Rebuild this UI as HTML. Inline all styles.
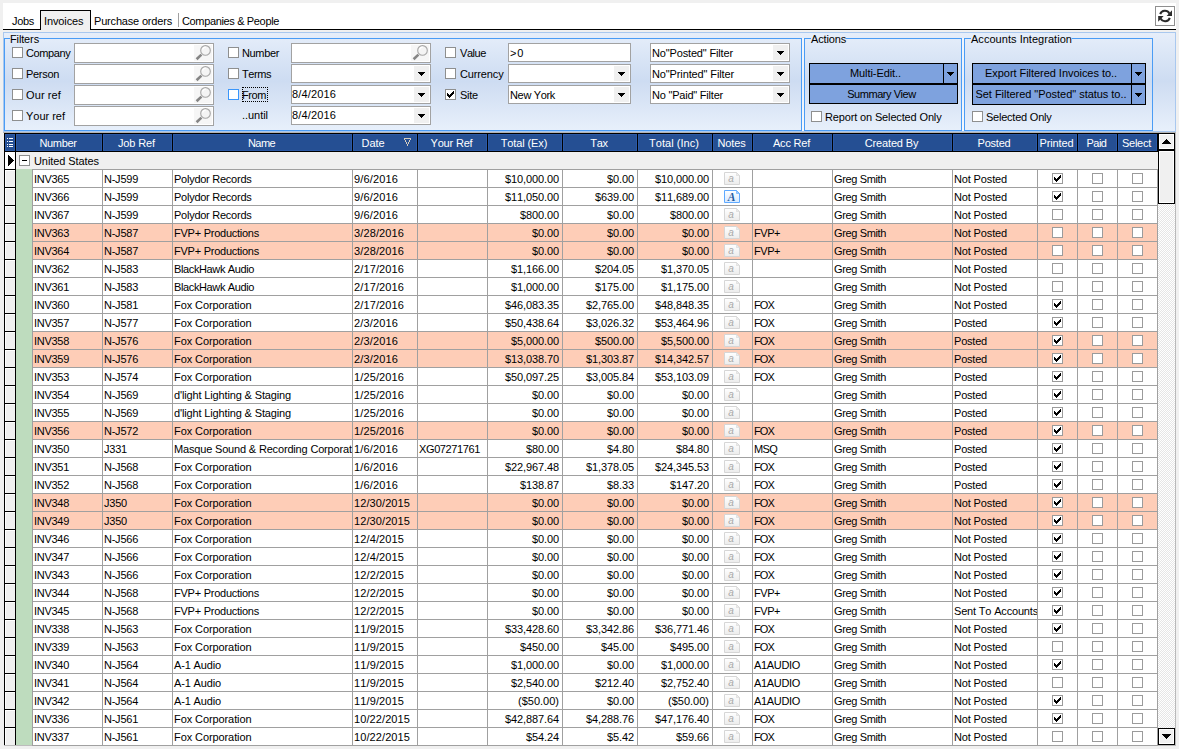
<!DOCTYPE html>
<html><head><meta charset="utf-8"><title>Invoices</title>
<style>
html,body{margin:0;padding:0}
body{width:1179px;height:749px;background:#f0f0f0;overflow:hidden;position:relative;font-family:"Liberation Sans",sans-serif;font-size:11px;color:#000}
.t{position:absolute;white-space:nowrap;line-height:13px;font-size:11px;font-kerning:none}
.w{color:#fff}
.cb{position:absolute;width:9px;height:9px;border:1px solid #8e8f8f;background:#fff}
.cb .ck{position:absolute;left:1px;top:1px}
.cb.g{border-color:#9b9b9b}
.cb.foc{border-color:#3a96fb}
.inp{background:#fff;border:1px solid #a2a2a2;box-sizing:border-box}
.gb{position:absolute;border:1px solid #4a9cf5;box-sizing:border-box}
.btn{position:absolute;box-sizing:border-box;border:1px solid #000;background:#7ea2de}
.hl{position:absolute;background:#000}
.gl{position:absolute;background:#a0a0a0}
.r{text-align:right}
.c{text-align:center}
</style></head><body>

<svg width="0" height="0" style="position:absolute"><defs><linearGradient id="ng" x1="0" y1="0" x2="0" y2="1"><stop offset="0" stop-color="#ffffff"/><stop offset="1" stop-color="#ececec"/></linearGradient><linearGradient id="nb" x1="0" y1="0" x2="0" y2="1"><stop offset="0" stop-color="#ffffff"/><stop offset="1" stop-color="#d5e8ff"/></linearGradient></defs></svg>
<div class="" style="position:absolute;left:3px;top:3px;width:1173px;height:26px;background:#fff"></div>
<div class="" style="position:absolute;left:3px;top:29px;width:1173px;height:1px;background:#000"></div>
<div class="" style="position:absolute;left:40px;top:10px;width:51px;height:20px;background:#f0f0f0;border:1px solid #000;border-bottom:none;box-sizing:border-box"></div>
<div class="t " style="left:12px;top:15px;letter-spacing:-0.309px;">Jobs</div>
<div class="t " style="left:44px;top:15px;letter-spacing:-0.107px;">Invoices</div>
<div class="t " style="left:94px;top:15px;letter-spacing:-0.180px;">Purchase orders</div>
<div class="t " style="left:182px;top:15px;letter-spacing:-0.352px;">Companies &amp; People</div>
<div class="" style="position:absolute;left:178px;top:13px;width:1px;height:14px;background:#a0a0a0"></div>
<div class="" style="position:absolute;left:1155px;top:6px;width:20px;height:20px;background:#fff;border:1px solid #8f8f8f;box-sizing:border-box"><svg width="18" height="18" viewBox="0 0 18 18" style="position:absolute;left:0;top:0"><g fill="none" stroke="#2a2a2a" stroke-width="2"><path d="M4.2 7.2 A5 5 0 0 1 13.4 6.6"/><path d="M13.8 10.8 A5 5 0 0 1 4.6 11.4"/></g><path d="M16 3.2 V8.9 H10.6 Z" fill="#2a2a2a"/><path d="M2.2 14.8 V9.1 H7.6 Z" fill="#2a2a2a"/></svg></div>
<div class="" style="position:absolute;left:3px;top:32px;width:1173px;height:100px;background:linear-gradient(to bottom,#e6eefa 0%,#cddcf2 49%,#cfddf2 52%,#e8f0fb 100%);border:1px solid #a9c8ef;box-sizing:border-box"></div>
<div class="" style="position:absolute;left:802px;top:38px;width:2px;height:93px;background:rgba(255,255,255,.55)"></div>
<div class="" style="position:absolute;left:962px;top:38px;width:2px;height:93px;background:rgba(255,255,255,.55)"></div>
<div class="" style="position:absolute;left:4px;top:38px;width:1px;height:93px;background:#4a9cf5"></div>
<div class="" style="position:absolute;left:801px;top:38px;width:1px;height:93px;background:#4a9cf5"></div>
<div class="" style="position:absolute;left:4px;top:130px;width:798px;height:1px;background:#4a9cf5"></div>
<div class="" style="position:absolute;left:4px;top:38px;width:6px;height:1px;background:#4a9cf5"></div>
<div class="" style="position:absolute;left:39px;top:38px;width:762px;height:1px;background:#4a9cf5"></div>
<div class="t " style="left:10px;top:33px;letter-spacing:-0.135px;">Filters</div>
<div class="" style="position:absolute;left:804px;top:38px;width:1px;height:93px;background:#4a9cf5"></div>
<div class="" style="position:absolute;left:961px;top:38px;width:1px;height:93px;background:#4a9cf5"></div>
<div class="" style="position:absolute;left:804px;top:130px;width:158px;height:1px;background:#4a9cf5"></div>
<div class="" style="position:absolute;left:804px;top:38px;width:7px;height:1px;background:#4a9cf5"></div>
<div class="" style="position:absolute;left:846px;top:38px;width:115px;height:1px;background:#4a9cf5"></div>
<div class="t " style="left:811px;top:33px;letter-spacing:-0.153px;">Actions</div>
<div class="" style="position:absolute;left:964px;top:38px;width:1px;height:93px;background:#4a9cf5"></div>
<div class="" style="position:absolute;left:1152px;top:38px;width:1px;height:93px;background:#4a9cf5"></div>
<div class="" style="position:absolute;left:964px;top:130px;width:189px;height:1px;background:#4a9cf5"></div>
<div class="" style="position:absolute;left:964px;top:38px;width:7px;height:1px;background:#4a9cf5"></div>
<div class="" style="position:absolute;left:1072px;top:38px;width:80px;height:1px;background:#4a9cf5"></div>
<div class="t " style="left:971px;top:33px;letter-spacing:0.036px;">Accounts Integration</div>
<div class="cb " style="left:12px;top:47px"></div>
<div class="t " style="left:26px;top:47px;letter-spacing:-0.368px;">Company</div>
<div class="inp" style="position:absolute;left:74px;top:43px;width:140px;height:20px;"></div>
<div class="" style="position:absolute;left:194px;top:45px;width:18px;height:16px;background:#f6f6f6"><svg width="18" height="16" viewBox="0 0 18 16" style="position:absolute;left:0;top:0"><line x1="7.4" y1="9.6" x2="2.6" y2="14.2" stroke="#858585" stroke-width="2.6"/><circle cx="11.5" cy="5.4" r="4.8" fill="#f4f4f4" stroke="#a6a6a6" stroke-width="1.1"/><path d="M8.6 4.6 A3.2 3.2 0 0 1 11.8 2.2" fill="none" stroke="#fff" stroke-width="1.2"/></svg></div>
<div class="cb " style="left:12px;top:68px"></div>
<div class="t " style="left:26px;top:68px;letter-spacing:-0.309px;">Person</div>
<div class="inp" style="position:absolute;left:74px;top:64px;width:140px;height:20px;"></div>
<div class="" style="position:absolute;left:194px;top:66px;width:18px;height:16px;background:#f6f6f6"><svg width="18" height="16" viewBox="0 0 18 16" style="position:absolute;left:0;top:0"><line x1="7.4" y1="9.6" x2="2.6" y2="14.2" stroke="#858585" stroke-width="2.6"/><circle cx="11.5" cy="5.4" r="4.8" fill="#f4f4f4" stroke="#a6a6a6" stroke-width="1.1"/><path d="M8.6 4.6 A3.2 3.2 0 0 1 11.8 2.2" fill="none" stroke="#fff" stroke-width="1.2"/></svg></div>
<div class="cb " style="left:12px;top:89px"></div>
<div class="t " style="left:26px;top:89px;letter-spacing:0.110px;">Our ref</div>
<div class="inp" style="position:absolute;left:74px;top:85px;width:140px;height:20px;"></div>
<div class="" style="position:absolute;left:194px;top:87px;width:18px;height:16px;background:#f6f6f6"><svg width="18" height="16" viewBox="0 0 18 16" style="position:absolute;left:0;top:0"><line x1="7.4" y1="9.6" x2="2.6" y2="14.2" stroke="#858585" stroke-width="2.6"/><circle cx="11.5" cy="5.4" r="4.8" fill="#f4f4f4" stroke="#a6a6a6" stroke-width="1.1"/><path d="M8.6 4.6 A3.2 3.2 0 0 1 11.8 2.2" fill="none" stroke="#fff" stroke-width="1.2"/></svg></div>
<div class="cb " style="left:12px;top:110px"></div>
<div class="t " style="left:26px;top:110px;letter-spacing:-0.016px;">Your ref</div>
<div class="inp" style="position:absolute;left:74px;top:106px;width:140px;height:20px;"></div>
<div class="" style="position:absolute;left:194px;top:108px;width:18px;height:16px;background:#f6f6f6"><svg width="18" height="16" viewBox="0 0 18 16" style="position:absolute;left:0;top:0"><line x1="7.4" y1="9.6" x2="2.6" y2="14.2" stroke="#858585" stroke-width="2.6"/><circle cx="11.5" cy="5.4" r="4.8" fill="#f4f4f4" stroke="#a6a6a6" stroke-width="1.1"/><path d="M8.6 4.6 A3.2 3.2 0 0 1 11.8 2.2" fill="none" stroke="#fff" stroke-width="1.2"/></svg></div>
<div class="cb " style="left:228px;top:47px"></div>
<div class="t " style="left:242px;top:47px;letter-spacing:-0.354px;">Number</div>
<div class="inp" style="position:absolute;left:291px;top:43px;width:140px;height:20px;"></div>
<div class="" style="position:absolute;left:411px;top:45px;width:18px;height:16px;background:#f6f6f6"><svg width="18" height="16" viewBox="0 0 18 16" style="position:absolute;left:0;top:0"><line x1="7.4" y1="9.6" x2="2.6" y2="14.2" stroke="#858585" stroke-width="2.6"/><circle cx="11.5" cy="5.4" r="4.8" fill="#f4f4f4" stroke="#a6a6a6" stroke-width="1.1"/><path d="M8.6 4.6 A3.2 3.2 0 0 1 11.8 2.2" fill="none" stroke="#fff" stroke-width="1.2"/></svg></div>
<div class="cb " style="left:228px;top:68px"></div>
<div class="t " style="left:242px;top:68px;letter-spacing:-0.433px;">Terms</div>
<div class="inp" style="position:absolute;left:291px;top:64px;width:140px;height:19px;"></div>
<div class="" style="position:absolute;left:414px;top:66px;width:15px;height:15px;background:#f0f0f0"><svg width="7" height="4" viewBox="0 0 7 4" shape-rendering="crispEdges" style="position:absolute;left:4px;top:6px"><path d="M0 0h7v1h-7zM1 1h5v1h-5zM2 2h3v1h-3zM3 3h1v1h-1z" fill="#000"/></svg></div>
<div class="cb foc" style="left:228px;top:89px"></div>
<div class="t " style="left:242px;top:89px;letter-spacing:-0.416px;">From</div>
<div class="inp" style="position:absolute;left:291px;top:85px;width:140px;height:19px;"></div>
<div class="" style="position:absolute;left:414px;top:87px;width:15px;height:15px;background:#f0f0f0"><svg width="7" height="4" viewBox="0 0 7 4" shape-rendering="crispEdges" style="position:absolute;left:4px;top:6px"><path d="M0 0h7v1h-7zM1 1h5v1h-5zM2 2h3v1h-3zM3 3h1v1h-1z" fill="#000"/></svg></div>
<div class="t " style="left:292px;top:88px;letter-spacing:0.148px;">8/4/2016</div>
<div class="" style="position:absolute;left:242px;top:87px;width:26px;height:15px;border:1px dotted #000;box-sizing:border-box"></div>
<div class="t " style="left:242px;top:109px;letter-spacing:-0.042px;">..until</div>
<div class="inp" style="position:absolute;left:291px;top:106px;width:140px;height:19px;"></div>
<div class="" style="position:absolute;left:414px;top:108px;width:15px;height:15px;background:#f0f0f0"><svg width="7" height="4" viewBox="0 0 7 4" shape-rendering="crispEdges" style="position:absolute;left:4px;top:6px"><path d="M0 0h7v1h-7zM1 1h5v1h-5zM2 2h3v1h-3zM3 3h1v1h-1z" fill="#000"/></svg></div>
<div class="t " style="left:292px;top:109px;letter-spacing:0.148px;">8/4/2016</div>
<div class="cb " style="left:445px;top:47px"></div>
<div class="t " style="left:460px;top:47px;letter-spacing:-0.427px;">Value</div>
<div class="inp" style="position:absolute;left:508px;top:43px;width:123px;height:19px;"></div>
<div class="t " style="left:510px;top:47px;letter-spacing:0.729px;">&gt;0</div>
<div class="cb " style="left:445px;top:68px"></div>
<div class="t " style="left:460px;top:68px;letter-spacing:-0.140px;">Currency</div>
<div class="inp" style="position:absolute;left:508px;top:64px;width:123px;height:19px;"></div>
<div class="" style="position:absolute;left:614px;top:66px;width:15px;height:15px;background:#f0f0f0"><svg width="7" height="4" viewBox="0 0 7 4" shape-rendering="crispEdges" style="position:absolute;left:4px;top:6px"><path d="M0 0h7v1h-7zM1 1h5v1h-5zM2 2h3v1h-3zM3 3h1v1h-1z" fill="#000"/></svg></div>
<div class="cb " style="left:445px;top:89px"><svg class="ck" width="7" height="7" viewBox="0 0 7 7" shape-rendering="crispEdges"><path d="M0 2h1v3h-1zM1 3h1v3h-1zM2 4h1v3h-1zM3 3h1v3h-1zM4 2h1v3h-1zM5 1h1v3h-1zM6 0h1v3h-1z" fill="#000"/></svg></div>
<div class="t " style="left:460px;top:89px;letter-spacing:-0.239px;">Site</div>
<div class="inp" style="position:absolute;left:508px;top:85px;width:123px;height:19px;"></div>
<div class="" style="position:absolute;left:614px;top:87px;width:15px;height:15px;background:#f0f0f0"><svg width="7" height="4" viewBox="0 0 7 4" shape-rendering="crispEdges" style="position:absolute;left:4px;top:6px"><path d="M0 0h7v1h-7zM1 1h5v1h-5zM2 2h3v1h-3zM3 3h1v1h-1z" fill="#000"/></svg></div>
<div class="t " style="left:510px;top:89px;letter-spacing:-0.335px;">New York</div>
<div class="inp" style="position:absolute;left:650px;top:43px;width:140px;height:19px;"></div>
<div class="" style="position:absolute;left:773px;top:45px;width:15px;height:15px;background:#f0f0f0"><svg width="7" height="4" viewBox="0 0 7 4" shape-rendering="crispEdges" style="position:absolute;left:4px;top:6px"><path d="M0 0h7v1h-7zM1 1h5v1h-5zM2 2h3v1h-3zM3 3h1v1h-1z" fill="#000"/></svg></div>
<div class="t " style="left:652px;top:47px;letter-spacing:-0.154px;">No"Posted" Filter</div>
<div class="inp" style="position:absolute;left:650px;top:64px;width:140px;height:19px;"></div>
<div class="" style="position:absolute;left:773px;top:66px;width:15px;height:15px;background:#f0f0f0"><svg width="7" height="4" viewBox="0 0 7 4" shape-rendering="crispEdges" style="position:absolute;left:4px;top:6px"><path d="M0 0h7v1h-7zM1 1h5v1h-5zM2 2h3v1h-3zM3 3h1v1h-1z" fill="#000"/></svg></div>
<div class="t " style="left:652px;top:68px;letter-spacing:-0.124px;">No"Printed" Filter</div>
<div class="inp" style="position:absolute;left:650px;top:85px;width:140px;height:19px;"></div>
<div class="" style="position:absolute;left:773px;top:87px;width:15px;height:15px;background:#f0f0f0"><svg width="7" height="4" viewBox="0 0 7 4" shape-rendering="crispEdges" style="position:absolute;left:4px;top:6px"><path d="M0 0h7v1h-7zM1 1h5v1h-5zM2 2h3v1h-3zM3 3h1v1h-1z" fill="#000"/></svg></div>
<div class="t " style="left:652px;top:89px;letter-spacing:-0.215px;">No "Paid" Filter</div>
<div class="btn" style="left:809px;top:63px;width:149px;height:21px"></div>
<div class="hl" style="position:absolute;left:943px;top:63px;width:1px;height:21px;"></div>
<svg width="7" height="4" viewBox="0 0 7 4" shape-rendering="crispEdges" style="position:absolute;left:947px;top:72px"><path d="M0 0h7v1h-7zM1 1h5v1h-5zM2 2h3v1h-3zM3 3h1v1h-1z" fill="#000"/></svg>
<div class="t c " style="left:809px;top:67px;width:133px;letter-spacing:-0.080px;">Multi-Edit..</div>
<div class="btn" style="left:809px;top:84px;width:149px;height:20px"></div>
<div class="t c " style="left:808px;top:88px;width:147px;letter-spacing:-0.455px;">Summary View</div>
<div class="cb " style="left:811px;top:111px"></div>
<div class="t " style="left:825px;top:111px;letter-spacing:-0.145px;">Report on Selected Only</div>
<div class="btn" style="left:972px;top:63px;width:174px;height:21px"></div>
<div class="hl" style="position:absolute;left:1131px;top:63px;width:1px;height:21px;"></div>
<svg width="7" height="4" viewBox="0 0 7 4" shape-rendering="crispEdges" style="position:absolute;left:1135px;top:72px"><path d="M0 0h7v1h-7zM1 1h5v1h-5zM2 2h3v1h-3zM3 3h1v1h-1z" fill="#000"/></svg>
<div class="t c " style="left:972px;top:67px;width:158px;letter-spacing:-0.044px;">Export Filtered Invoices to..</div>
<div class="btn" style="left:972px;top:84px;width:174px;height:21px"></div>
<div class="hl" style="position:absolute;left:1131px;top:84px;width:1px;height:21px;"></div>
<svg width="7" height="4" viewBox="0 0 7 4" shape-rendering="crispEdges" style="position:absolute;left:1135px;top:93px"><path d="M0 0h7v1h-7zM1 1h5v1h-5zM2 2h3v1h-3zM3 3h1v1h-1z" fill="#000"/></svg>
<div class="t c " style="left:972px;top:88px;width:158px;letter-spacing:-0.033px;">Set Filtered "Posted" status to..</div>
<div class="cb " style="left:972px;top:111px"></div>
<div class="t " style="left:986px;top:111px;letter-spacing:-0.229px;">Selected Only</div>
<div class="" style="position:absolute;left:3px;top:132px;width:1173px;height:1px;background:#b4b4b4"></div>
<div class="" style="position:absolute;left:4px;top:133px;width:1154px;height:19px;background:#000"></div>
<div class="" style="position:absolute;left:5px;top:134px;width:10px;height:17px;background:#254f93;box-shadow:inset 0 0 0 1px #2b59a6"></div>
<div class="" style="position:absolute;left:16px;top:134px;width:86px;height:17px;background:#254f93;box-shadow:inset 0 0 0 1px #2b59a6"></div>
<div class="t c w" style="left:15px;top:137px;width:86px;letter-spacing:-0.354px;">Number</div>
<div class="" style="position:absolute;left:103px;top:134px;width:69px;height:17px;background:#254f93;box-shadow:inset 0 0 0 1px #2b59a6"></div>
<div class="t c w" style="left:102px;top:137px;width:69px;letter-spacing:-0.130px;">Job Ref</div>
<div class="" style="position:absolute;left:173px;top:134px;width:179px;height:17px;background:#254f93;box-shadow:inset 0 0 0 1px #2b59a6"></div>
<div class="t c w" style="left:172px;top:137px;width:179px;letter-spacing:-0.586px;">Name</div>
<div class="" style="position:absolute;left:353px;top:134px;width:64px;height:17px;background:#254f93;box-shadow:inset 0 0 0 1px #2b59a6"></div>
<div class="t c w" style="left:352px;top:137px;width:42px;letter-spacing:-0.059px;">Date</div>
<div class="" style="position:absolute;left:418px;top:134px;width:69px;height:17px;background:#254f93;box-shadow:inset 0 0 0 1px #2b59a6"></div>
<div class="t c w" style="left:417px;top:137px;width:69px;letter-spacing:-0.176px;">Your Ref</div>
<div class="" style="position:absolute;left:488px;top:134px;width:74px;height:17px;background:#254f93;box-shadow:inset 0 0 0 1px #2b59a6"></div>
<div class="t c w" style="left:487px;top:137px;width:74px;letter-spacing:-0.117px;">Total (Ex)</div>
<div class="" style="position:absolute;left:563px;top:134px;width:74px;height:17px;background:#254f93;box-shadow:inset 0 0 0 1px #2b59a6"></div>
<div class="t c w" style="left:562px;top:137px;width:74px;letter-spacing:-0.279px;">Tax</div>
<div class="" style="position:absolute;left:638px;top:134px;width:74px;height:17px;background:#254f93;box-shadow:inset 0 0 0 1px #2b59a6"></div>
<div class="t c w" style="left:637px;top:137px;width:74px;letter-spacing:0.044px;">Total (Inc)</div>
<div class="" style="position:absolute;left:713px;top:134px;width:39px;height:17px;background:#254f93;box-shadow:inset 0 0 0 1px #2b59a6"></div>
<div class="t c w" style="left:712px;top:137px;width:39px;letter-spacing:-0.147px;">Notes</div>
<div class="" style="position:absolute;left:753px;top:134px;width:79px;height:17px;background:#254f93;box-shadow:inset 0 0 0 1px #2b59a6"></div>
<div class="t c w" style="left:752px;top:137px;width:79px;letter-spacing:-0.216px;">Acc Ref</div>
<div class="" style="position:absolute;left:833px;top:134px;width:119px;height:17px;background:#254f93;box-shadow:inset 0 0 0 1px #2b59a6"></div>
<div class="t c w" style="left:832px;top:137px;width:119px;letter-spacing:-0.153px;">Created By</div>
<div class="" style="position:absolute;left:953px;top:134px;width:84px;height:17px;background:#254f93;box-shadow:inset 0 0 0 1px #2b59a6"></div>
<div class="t c w" style="left:952px;top:137px;width:84px;letter-spacing:-0.208px;">Posted</div>
<div class="" style="position:absolute;left:1038px;top:134px;width:39px;height:17px;background:#254f93;box-shadow:inset 0 0 0 1px #2b59a6"></div>
<div class="t c w" style="left:1037px;top:137px;width:39px;letter-spacing:-0.122px;">Printed</div>
<div class="" style="position:absolute;left:1078px;top:134px;width:39px;height:17px;background:#254f93;box-shadow:inset 0 0 0 1px #2b59a6"></div>
<div class="t c w" style="left:1077px;top:137px;width:39px;letter-spacing:-0.504px;">Paid</div>
<div class="" style="position:absolute;left:1118px;top:134px;width:39px;height:17px;background:#254f93;box-shadow:inset 0 0 0 1px #2b59a6"></div>
<div class="t c w" style="left:1117px;top:137px;width:39px;letter-spacing:-0.262px;">Select</div>
<div class="" style="position:absolute;left:7px;top:138.2px;width:1px;height:1px;background:#fff"></div>
<div class="" style="position:absolute;left:9px;top:138.2px;width:4px;height:1px;background:#fff"></div>
<div class="" style="position:absolute;left:7px;top:140.9px;width:1px;height:1px;background:#fff"></div>
<div class="" style="position:absolute;left:9px;top:140.9px;width:4px;height:1px;background:#fff"></div>
<div class="" style="position:absolute;left:7px;top:143.5px;width:1px;height:1px;background:#fff"></div>
<div class="" style="position:absolute;left:9px;top:143.5px;width:4px;height:1px;background:#fff"></div>
<div class="" style="position:absolute;left:7px;top:145.9px;width:1px;height:1px;background:#fff"></div>
<div class="" style="position:absolute;left:9px;top:145.9px;width:4px;height:1px;background:#fff"></div>
<svg width="7" height="8" viewBox="0 0 7 8" shape-rendering="crispEdges" style="position:absolute;left:404px;top:138px"><path d="M0 0h7v1h-7zM0 1h1v1h-1zM6 1h1v1h-1zM1 2h1v2h-1zM5 2h1v2h-1zM2 4h1v2h-1zM4 4h1v2h-1zM3 6h1v2h-1z" fill="#d6cdbf"/></svg>
<div class="hl" style="position:absolute;left:4px;top:152px;width:1px;height:593px;"></div>
<div class="hl" style="position:absolute;left:15px;top:152px;width:1px;height:593px;"></div>
<div class="" style="position:absolute;left:5px;top:152px;width:10px;height:17px;background:#fff"></div>
<div class="hl" style="position:absolute;left:5px;top:169px;width:10px;height:1px;"></div>
<svg width="6" height="11" viewBox="0 0 6 11" shape-rendering="crispEdges" style="position:absolute;left:8px;top:155px"><path d="M0 0h1v11h-1zM1 1h1v9h-1zM2 2h1v7h-1zM3 3h1v5h-1zM4 4h1v3h-1zM5 5h1v1h-1z" fill="#000"/></svg>
<div class="" style="position:absolute;left:16px;top:152px;width:1141px;height:17px;background:#f0f0f0"></div>
<div class="" style="position:absolute;left:19px;top:155px;width:11px;height:11px;border:1px solid #8e8f8f;background:#fff;box-sizing:border-box"></div>
<div class="hl" style="position:absolute;left:22px;top:160px;width:5px;height:1px;"></div>
<div class="t " style="left:34px;top:155px;letter-spacing:-0.080px;">United States</div>
<div class="" style="position:absolute;left:16px;top:169px;width:1142px;height:577px;background:#a0a0a0"></div>
<div class="" style="position:absolute;left:16px;top:169px;width:16px;height:576px;background:#bedcbe"></div>
<div class="" style="position:absolute;left:4px;top:745px;width:28px;height:1px;background:#bcbcbc"></div>
<div class="" style="position:absolute;left:5px;top:170px;width:10px;height:17px;background:#f0f0f0;box-shadow:inset 1px 1px 0 #fff"></div>
<div class="hl" style="position:absolute;left:5px;top:187px;width:10px;height:1px;"></div>
<div class="" style="position:absolute;left:33px;top:170px;width:69px;height:17px;background:#fff;overflow:hidden"><div class="t" style="left:1px;top:3px;letter-spacing:-0.282px;">INV365</div></div>
<div class="" style="position:absolute;left:103px;top:170px;width:69px;height:17px;background:#fff;overflow:hidden"><div class="t" style="left:1px;top:3px;letter-spacing:-0.243px;">N-J599</div></div>
<div class="" style="position:absolute;left:173px;top:170px;width:179px;height:17px;background:#fff;overflow:hidden"><div class="t" style="left:1px;top:3px;letter-spacing:-0.254px;">Polydor Records</div></div>
<div class="" style="position:absolute;left:353px;top:170px;width:64px;height:17px;background:#fff;overflow:hidden"><div class="t" style="left:1px;top:3px;letter-spacing:0.148px;">9/6/2016</div></div>
<div class="" style="position:absolute;left:418px;top:170px;width:69px;height:17px;background:#fff;overflow:hidden"></div>
<div class="" style="position:absolute;left:488px;top:170px;width:74px;height:17px;background:#fff;overflow:hidden"><div class="t r" style="left:0;top:3px;width:71px;letter-spacing:-0.105px;">$10,000.00</div></div>
<div class="" style="position:absolute;left:563px;top:170px;width:74px;height:17px;background:#fff;overflow:hidden"><div class="t r" style="left:0;top:3px;width:71px;letter-spacing:-0.105px;">$0.00</div></div>
<div class="" style="position:absolute;left:638px;top:170px;width:74px;height:17px;background:#fff;overflow:hidden"><div class="t r" style="left:0;top:3px;width:71px;letter-spacing:-0.105px;">$10,000.00</div></div>
<div class="" style="position:absolute;left:713px;top:170px;width:39px;height:17px;background:#fff;overflow:hidden"><svg width="16" height="13" viewBox="0 0 16 13" style="position:absolute;left:11px;top:2px"><path d="M0.5 0.5H12.5L15.5 3.5V12.5H0.5Z" fill="url(#ng)" stroke="#d6d6d6"/><path d="M12.5 0.5V3.5H15.5Z" fill="#ececec" stroke="#d9d9d9" stroke-width="0.6"/><text x="7" y="10" text-anchor="middle" font-family="Liberation Sans" font-style="italic" font-size="10" fill="#aaaaaa">a</text></svg></div>
<div class="" style="position:absolute;left:753px;top:170px;width:79px;height:17px;background:#fff;overflow:hidden"></div>
<div class="" style="position:absolute;left:833px;top:170px;width:119px;height:17px;background:#fff;overflow:hidden"><div class="t" style="left:1px;top:3px;letter-spacing:-0.363px;">Greg Smith</div></div>
<div class="" style="position:absolute;left:953px;top:170px;width:84px;height:17px;background:#fff;overflow:hidden"><div class="t" style="left:1px;top:3px;letter-spacing:-0.142px;">Not Posted</div></div>
<div class="" style="position:absolute;left:1038px;top:170px;width:39px;height:17px;background:#fff;overflow:hidden"><div class="cb g" style="left:14px;top:3px"><svg class="ck" width="7" height="7" viewBox="0 0 7 7" shape-rendering="crispEdges"><path d="M0 2h1v3h-1zM1 3h1v3h-1zM2 4h1v3h-1zM3 3h1v3h-1zM4 2h1v3h-1zM5 1h1v3h-1zM6 0h1v3h-1z" fill="#000"/></svg></div></div>
<div class="" style="position:absolute;left:1078px;top:170px;width:39px;height:17px;background:#fff;overflow:hidden"><div class="cb g" style="left:14px;top:3px"></div></div>
<div class="" style="position:absolute;left:1118px;top:170px;width:39px;height:17px;background:#fff;overflow:hidden"><div class="cb g" style="left:14px;top:3px"></div></div>
<div class="" style="position:absolute;left:5px;top:188px;width:10px;height:17px;background:#f0f0f0;box-shadow:inset 1px 1px 0 #fff"></div>
<div class="hl" style="position:absolute;left:5px;top:205px;width:10px;height:1px;"></div>
<div class="" style="position:absolute;left:33px;top:188px;width:69px;height:17px;background:#fff;overflow:hidden"><div class="t" style="left:1px;top:3px;letter-spacing:-0.282px;">INV366</div></div>
<div class="" style="position:absolute;left:103px;top:188px;width:69px;height:17px;background:#fff;overflow:hidden"><div class="t" style="left:1px;top:3px;letter-spacing:-0.243px;">N-J599</div></div>
<div class="" style="position:absolute;left:173px;top:188px;width:179px;height:17px;background:#fff;overflow:hidden"><div class="t" style="left:1px;top:3px;letter-spacing:-0.254px;">Polydor Records</div></div>
<div class="" style="position:absolute;left:353px;top:188px;width:64px;height:17px;background:#fff;overflow:hidden"><div class="t" style="left:1px;top:3px;letter-spacing:0.148px;">9/6/2016</div></div>
<div class="" style="position:absolute;left:418px;top:188px;width:69px;height:17px;background:#fff;overflow:hidden"></div>
<div class="" style="position:absolute;left:488px;top:188px;width:74px;height:17px;background:#fff;overflow:hidden"><div class="t r" style="left:0;top:3px;width:71px;letter-spacing:-0.105px;">$11,050.00</div></div>
<div class="" style="position:absolute;left:563px;top:188px;width:74px;height:17px;background:#fff;overflow:hidden"><div class="t r" style="left:0;top:3px;width:71px;letter-spacing:-0.109px;">$639.00</div></div>
<div class="" style="position:absolute;left:638px;top:188px;width:74px;height:17px;background:#fff;overflow:hidden"><div class="t r" style="left:0;top:3px;width:71px;letter-spacing:-0.105px;">$11,689.00</div></div>
<div class="" style="position:absolute;left:713px;top:188px;width:39px;height:17px;background:#fff;overflow:hidden"><svg width="16" height="13" viewBox="0 0 16 13" style="position:absolute;left:11px;top:2px"><path d="M0.5 0.5H12.5L15.5 3.5V12.5H0.5Z" fill="url(#nb)" stroke="#5ea9ff"/><path d="M12.5 0.5V3.5H15.5Z" fill="#9ccaff" stroke="#5ea9ff" stroke-width="0.6"/><text x="7.5" y="10.6" text-anchor="middle" font-family="Liberation Serif" font-weight="bold" font-style="italic" font-size="11.5" fill="#1f5a9e">A</text></svg></div>
<div class="" style="position:absolute;left:753px;top:188px;width:79px;height:17px;background:#fff;overflow:hidden"></div>
<div class="" style="position:absolute;left:833px;top:188px;width:119px;height:17px;background:#fff;overflow:hidden"><div class="t" style="left:1px;top:3px;letter-spacing:-0.363px;">Greg Smith</div></div>
<div class="" style="position:absolute;left:953px;top:188px;width:84px;height:17px;background:#fff;overflow:hidden"><div class="t" style="left:1px;top:3px;letter-spacing:-0.142px;">Not Posted</div></div>
<div class="" style="position:absolute;left:1038px;top:188px;width:39px;height:17px;background:#fff;overflow:hidden"><div class="cb g" style="left:14px;top:3px"><svg class="ck" width="7" height="7" viewBox="0 0 7 7" shape-rendering="crispEdges"><path d="M0 2h1v3h-1zM1 3h1v3h-1zM2 4h1v3h-1zM3 3h1v3h-1zM4 2h1v3h-1zM5 1h1v3h-1zM6 0h1v3h-1z" fill="#000"/></svg></div></div>
<div class="" style="position:absolute;left:1078px;top:188px;width:39px;height:17px;background:#fff;overflow:hidden"><div class="cb g" style="left:14px;top:3px"></div></div>
<div class="" style="position:absolute;left:1118px;top:188px;width:39px;height:17px;background:#fff;overflow:hidden"><div class="cb g" style="left:14px;top:3px"></div></div>
<div class="" style="position:absolute;left:5px;top:206px;width:10px;height:17px;background:#f0f0f0;box-shadow:inset 1px 1px 0 #fff"></div>
<div class="hl" style="position:absolute;left:5px;top:223px;width:10px;height:1px;"></div>
<div class="" style="position:absolute;left:33px;top:206px;width:69px;height:17px;background:#fff;overflow:hidden"><div class="t" style="left:1px;top:3px;letter-spacing:-0.282px;">INV367</div></div>
<div class="" style="position:absolute;left:103px;top:206px;width:69px;height:17px;background:#fff;overflow:hidden"><div class="t" style="left:1px;top:3px;letter-spacing:-0.243px;">N-J599</div></div>
<div class="" style="position:absolute;left:173px;top:206px;width:179px;height:17px;background:#fff;overflow:hidden"><div class="t" style="left:1px;top:3px;letter-spacing:-0.254px;">Polydor Records</div></div>
<div class="" style="position:absolute;left:353px;top:206px;width:64px;height:17px;background:#fff;overflow:hidden"><div class="t" style="left:1px;top:3px;letter-spacing:0.148px;">9/6/2016</div></div>
<div class="" style="position:absolute;left:418px;top:206px;width:69px;height:17px;background:#fff;overflow:hidden"></div>
<div class="" style="position:absolute;left:488px;top:206px;width:74px;height:17px;background:#fff;overflow:hidden"><div class="t r" style="left:0;top:3px;width:71px;letter-spacing:-0.109px;">$800.00</div></div>
<div class="" style="position:absolute;left:563px;top:206px;width:74px;height:17px;background:#fff;overflow:hidden"><div class="t r" style="left:0;top:3px;width:71px;letter-spacing:-0.105px;">$0.00</div></div>
<div class="" style="position:absolute;left:638px;top:206px;width:74px;height:17px;background:#fff;overflow:hidden"><div class="t r" style="left:0;top:3px;width:71px;letter-spacing:-0.109px;">$800.00</div></div>
<div class="" style="position:absolute;left:713px;top:206px;width:39px;height:17px;background:#fff;overflow:hidden"><svg width="16" height="13" viewBox="0 0 16 13" style="position:absolute;left:11px;top:2px"><path d="M0.5 0.5H12.5L15.5 3.5V12.5H0.5Z" fill="url(#ng)" stroke="#d6d6d6"/><path d="M12.5 0.5V3.5H15.5Z" fill="#ececec" stroke="#d9d9d9" stroke-width="0.6"/><text x="7" y="10" text-anchor="middle" font-family="Liberation Sans" font-style="italic" font-size="10" fill="#aaaaaa">a</text></svg></div>
<div class="" style="position:absolute;left:753px;top:206px;width:79px;height:17px;background:#fff;overflow:hidden"></div>
<div class="" style="position:absolute;left:833px;top:206px;width:119px;height:17px;background:#fff;overflow:hidden"><div class="t" style="left:1px;top:3px;letter-spacing:-0.363px;">Greg Smith</div></div>
<div class="" style="position:absolute;left:953px;top:206px;width:84px;height:17px;background:#fff;overflow:hidden"><div class="t" style="left:1px;top:3px;letter-spacing:-0.142px;">Not Posted</div></div>
<div class="" style="position:absolute;left:1038px;top:206px;width:39px;height:17px;background:#fff;overflow:hidden"><div class="cb g" style="left:14px;top:3px"></div></div>
<div class="" style="position:absolute;left:1078px;top:206px;width:39px;height:17px;background:#fff;overflow:hidden"><div class="cb g" style="left:14px;top:3px"></div></div>
<div class="" style="position:absolute;left:1118px;top:206px;width:39px;height:17px;background:#fff;overflow:hidden"><div class="cb g" style="left:14px;top:3px"></div></div>
<div class="" style="position:absolute;left:5px;top:224px;width:10px;height:17px;background:#f0f0f0;box-shadow:inset 1px 1px 0 #fff"></div>
<div class="hl" style="position:absolute;left:5px;top:241px;width:10px;height:1px;"></div>
<div class="" style="position:absolute;left:33px;top:224px;width:69px;height:17px;background:#fecdb7;overflow:hidden"><div class="t" style="left:1px;top:3px;letter-spacing:-0.282px;">INV363</div></div>
<div class="" style="position:absolute;left:103px;top:224px;width:69px;height:17px;background:#fecdb7;overflow:hidden"><div class="t" style="left:1px;top:3px;letter-spacing:-0.243px;">N-J587</div></div>
<div class="" style="position:absolute;left:173px;top:224px;width:179px;height:17px;background:#fecdb7;overflow:hidden"><div class="t" style="left:1px;top:3px;letter-spacing:-0.248px;">FVP+ Productions</div></div>
<div class="" style="position:absolute;left:353px;top:224px;width:64px;height:17px;background:#fecdb7;overflow:hidden"><div class="t" style="left:1px;top:3px;letter-spacing:0.118px;">3/28/2016</div></div>
<div class="" style="position:absolute;left:418px;top:224px;width:69px;height:17px;background:#fecdb7;overflow:hidden"></div>
<div class="" style="position:absolute;left:488px;top:224px;width:74px;height:17px;background:#fecdb7;overflow:hidden"><div class="t r" style="left:0;top:3px;width:71px;letter-spacing:-0.105px;">$0.00</div></div>
<div class="" style="position:absolute;left:563px;top:224px;width:74px;height:17px;background:#fecdb7;overflow:hidden"><div class="t r" style="left:0;top:3px;width:71px;letter-spacing:-0.105px;">$0.00</div></div>
<div class="" style="position:absolute;left:638px;top:224px;width:74px;height:17px;background:#fecdb7;overflow:hidden"><div class="t r" style="left:0;top:3px;width:71px;letter-spacing:-0.105px;">$0.00</div></div>
<div class="" style="position:absolute;left:713px;top:224px;width:39px;height:17px;background:#fecdb7;overflow:hidden"><svg width="16" height="13" viewBox="0 0 16 13" style="position:absolute;left:11px;top:2px"><path d="M0.5 0.5H12.5L15.5 3.5V12.5H0.5Z" fill="url(#ng)" stroke="#d6d6d6"/><path d="M12.5 0.5V3.5H15.5Z" fill="#ececec" stroke="#d9d9d9" stroke-width="0.6"/><text x="7" y="10" text-anchor="middle" font-family="Liberation Sans" font-style="italic" font-size="10" fill="#aaaaaa">a</text></svg></div>
<div class="" style="position:absolute;left:753px;top:224px;width:79px;height:17px;background:#fecdb7;overflow:hidden"><div class="t" style="left:1px;top:3px;letter-spacing:-0.454px;">FVP+</div></div>
<div class="" style="position:absolute;left:833px;top:224px;width:119px;height:17px;background:#fecdb7;overflow:hidden"><div class="t" style="left:1px;top:3px;letter-spacing:-0.363px;">Greg Smith</div></div>
<div class="" style="position:absolute;left:953px;top:224px;width:84px;height:17px;background:#fecdb7;overflow:hidden"><div class="t" style="left:1px;top:3px;letter-spacing:-0.142px;">Not Posted</div></div>
<div class="" style="position:absolute;left:1038px;top:224px;width:39px;height:17px;background:#fecdb7;overflow:hidden"><div class="cb g" style="left:14px;top:3px"></div></div>
<div class="" style="position:absolute;left:1078px;top:224px;width:39px;height:17px;background:#fecdb7;overflow:hidden"><div class="cb g" style="left:14px;top:3px"></div></div>
<div class="" style="position:absolute;left:1118px;top:224px;width:39px;height:17px;background:#fecdb7;overflow:hidden"><div class="cb g" style="left:14px;top:3px"></div></div>
<div class="" style="position:absolute;left:5px;top:242px;width:10px;height:17px;background:#f0f0f0;box-shadow:inset 1px 1px 0 #fff"></div>
<div class="hl" style="position:absolute;left:5px;top:259px;width:10px;height:1px;"></div>
<div class="" style="position:absolute;left:33px;top:242px;width:69px;height:17px;background:#fecdb7;overflow:hidden"><div class="t" style="left:1px;top:3px;letter-spacing:-0.282px;">INV364</div></div>
<div class="" style="position:absolute;left:103px;top:242px;width:69px;height:17px;background:#fecdb7;overflow:hidden"><div class="t" style="left:1px;top:3px;letter-spacing:-0.243px;">N-J587</div></div>
<div class="" style="position:absolute;left:173px;top:242px;width:179px;height:17px;background:#fecdb7;overflow:hidden"><div class="t" style="left:1px;top:3px;letter-spacing:-0.248px;">FVP+ Productions</div></div>
<div class="" style="position:absolute;left:353px;top:242px;width:64px;height:17px;background:#fecdb7;overflow:hidden"><div class="t" style="left:1px;top:3px;letter-spacing:0.118px;">3/28/2016</div></div>
<div class="" style="position:absolute;left:418px;top:242px;width:69px;height:17px;background:#fecdb7;overflow:hidden"></div>
<div class="" style="position:absolute;left:488px;top:242px;width:74px;height:17px;background:#fecdb7;overflow:hidden"><div class="t r" style="left:0;top:3px;width:71px;letter-spacing:-0.105px;">$0.00</div></div>
<div class="" style="position:absolute;left:563px;top:242px;width:74px;height:17px;background:#fecdb7;overflow:hidden"><div class="t r" style="left:0;top:3px;width:71px;letter-spacing:-0.105px;">$0.00</div></div>
<div class="" style="position:absolute;left:638px;top:242px;width:74px;height:17px;background:#fecdb7;overflow:hidden"><div class="t r" style="left:0;top:3px;width:71px;letter-spacing:-0.105px;">$0.00</div></div>
<div class="" style="position:absolute;left:713px;top:242px;width:39px;height:17px;background:#fecdb7;overflow:hidden"><svg width="16" height="13" viewBox="0 0 16 13" style="position:absolute;left:11px;top:2px"><path d="M0.5 0.5H12.5L15.5 3.5V12.5H0.5Z" fill="url(#ng)" stroke="#d6d6d6"/><path d="M12.5 0.5V3.5H15.5Z" fill="#ececec" stroke="#d9d9d9" stroke-width="0.6"/><text x="7" y="10" text-anchor="middle" font-family="Liberation Sans" font-style="italic" font-size="10" fill="#aaaaaa">a</text></svg></div>
<div class="" style="position:absolute;left:753px;top:242px;width:79px;height:17px;background:#fecdb7;overflow:hidden"><div class="t" style="left:1px;top:3px;letter-spacing:-0.454px;">FVP+</div></div>
<div class="" style="position:absolute;left:833px;top:242px;width:119px;height:17px;background:#fecdb7;overflow:hidden"><div class="t" style="left:1px;top:3px;letter-spacing:-0.363px;">Greg Smith</div></div>
<div class="" style="position:absolute;left:953px;top:242px;width:84px;height:17px;background:#fecdb7;overflow:hidden"><div class="t" style="left:1px;top:3px;letter-spacing:-0.142px;">Not Posted</div></div>
<div class="" style="position:absolute;left:1038px;top:242px;width:39px;height:17px;background:#fecdb7;overflow:hidden"><div class="cb g" style="left:14px;top:3px"></div></div>
<div class="" style="position:absolute;left:1078px;top:242px;width:39px;height:17px;background:#fecdb7;overflow:hidden"><div class="cb g" style="left:14px;top:3px"></div></div>
<div class="" style="position:absolute;left:1118px;top:242px;width:39px;height:17px;background:#fecdb7;overflow:hidden"><div class="cb g" style="left:14px;top:3px"></div></div>
<div class="" style="position:absolute;left:5px;top:260px;width:10px;height:17px;background:#f0f0f0;box-shadow:inset 1px 1px 0 #fff"></div>
<div class="hl" style="position:absolute;left:5px;top:277px;width:10px;height:1px;"></div>
<div class="" style="position:absolute;left:33px;top:260px;width:69px;height:17px;background:#fff;overflow:hidden"><div class="t" style="left:1px;top:3px;letter-spacing:-0.282px;">INV362</div></div>
<div class="" style="position:absolute;left:103px;top:260px;width:69px;height:17px;background:#fff;overflow:hidden"><div class="t" style="left:1px;top:3px;letter-spacing:-0.243px;">N-J583</div></div>
<div class="" style="position:absolute;left:173px;top:260px;width:179px;height:17px;background:#fff;overflow:hidden"><div class="t" style="left:1px;top:3px;letter-spacing:-0.373px;">BlackHawk Audio</div></div>
<div class="" style="position:absolute;left:353px;top:260px;width:64px;height:17px;background:#fff;overflow:hidden"><div class="t" style="left:1px;top:3px;letter-spacing:0.118px;">2/17/2016</div></div>
<div class="" style="position:absolute;left:418px;top:260px;width:69px;height:17px;background:#fff;overflow:hidden"></div>
<div class="" style="position:absolute;left:488px;top:260px;width:74px;height:17px;background:#fff;overflow:hidden"><div class="t r" style="left:0;top:3px;width:71px;letter-spacing:-0.104px;">$1,166.00</div></div>
<div class="" style="position:absolute;left:563px;top:260px;width:74px;height:17px;background:#fff;overflow:hidden"><div class="t r" style="left:0;top:3px;width:71px;letter-spacing:-0.109px;">$204.05</div></div>
<div class="" style="position:absolute;left:638px;top:260px;width:74px;height:17px;background:#fff;overflow:hidden"><div class="t r" style="left:0;top:3px;width:71px;letter-spacing:-0.104px;">$1,370.05</div></div>
<div class="" style="position:absolute;left:713px;top:260px;width:39px;height:17px;background:#fff;overflow:hidden"><svg width="16" height="13" viewBox="0 0 16 13" style="position:absolute;left:11px;top:2px"><path d="M0.5 0.5H12.5L15.5 3.5V12.5H0.5Z" fill="url(#ng)" stroke="#d6d6d6"/><path d="M12.5 0.5V3.5H15.5Z" fill="#ececec" stroke="#d9d9d9" stroke-width="0.6"/><text x="7" y="10" text-anchor="middle" font-family="Liberation Sans" font-style="italic" font-size="10" fill="#aaaaaa">a</text></svg></div>
<div class="" style="position:absolute;left:753px;top:260px;width:79px;height:17px;background:#fff;overflow:hidden"></div>
<div class="" style="position:absolute;left:833px;top:260px;width:119px;height:17px;background:#fff;overflow:hidden"><div class="t" style="left:1px;top:3px;letter-spacing:-0.363px;">Greg Smith</div></div>
<div class="" style="position:absolute;left:953px;top:260px;width:84px;height:17px;background:#fff;overflow:hidden"><div class="t" style="left:1px;top:3px;letter-spacing:-0.142px;">Not Posted</div></div>
<div class="" style="position:absolute;left:1038px;top:260px;width:39px;height:17px;background:#fff;overflow:hidden"><div class="cb g" style="left:14px;top:3px"></div></div>
<div class="" style="position:absolute;left:1078px;top:260px;width:39px;height:17px;background:#fff;overflow:hidden"><div class="cb g" style="left:14px;top:3px"></div></div>
<div class="" style="position:absolute;left:1118px;top:260px;width:39px;height:17px;background:#fff;overflow:hidden"><div class="cb g" style="left:14px;top:3px"></div></div>
<div class="" style="position:absolute;left:5px;top:278px;width:10px;height:17px;background:#f0f0f0;box-shadow:inset 1px 1px 0 #fff"></div>
<div class="hl" style="position:absolute;left:5px;top:295px;width:10px;height:1px;"></div>
<div class="" style="position:absolute;left:33px;top:278px;width:69px;height:17px;background:#fff;overflow:hidden"><div class="t" style="left:1px;top:3px;letter-spacing:-0.282px;">INV361</div></div>
<div class="" style="position:absolute;left:103px;top:278px;width:69px;height:17px;background:#fff;overflow:hidden"><div class="t" style="left:1px;top:3px;letter-spacing:-0.243px;">N-J583</div></div>
<div class="" style="position:absolute;left:173px;top:278px;width:179px;height:17px;background:#fff;overflow:hidden"><div class="t" style="left:1px;top:3px;letter-spacing:-0.373px;">BlackHawk Audio</div></div>
<div class="" style="position:absolute;left:353px;top:278px;width:64px;height:17px;background:#fff;overflow:hidden"><div class="t" style="left:1px;top:3px;letter-spacing:0.118px;">2/17/2016</div></div>
<div class="" style="position:absolute;left:418px;top:278px;width:69px;height:17px;background:#fff;overflow:hidden"></div>
<div class="" style="position:absolute;left:488px;top:278px;width:74px;height:17px;background:#fff;overflow:hidden"><div class="t r" style="left:0;top:3px;width:71px;letter-spacing:-0.104px;">$1,000.00</div></div>
<div class="" style="position:absolute;left:563px;top:278px;width:74px;height:17px;background:#fff;overflow:hidden"><div class="t r" style="left:0;top:3px;width:71px;letter-spacing:-0.109px;">$175.00</div></div>
<div class="" style="position:absolute;left:638px;top:278px;width:74px;height:17px;background:#fff;overflow:hidden"><div class="t r" style="left:0;top:3px;width:71px;letter-spacing:-0.104px;">$1,175.00</div></div>
<div class="" style="position:absolute;left:713px;top:278px;width:39px;height:17px;background:#fff;overflow:hidden"><svg width="16" height="13" viewBox="0 0 16 13" style="position:absolute;left:11px;top:2px"><path d="M0.5 0.5H12.5L15.5 3.5V12.5H0.5Z" fill="url(#ng)" stroke="#d6d6d6"/><path d="M12.5 0.5V3.5H15.5Z" fill="#ececec" stroke="#d9d9d9" stroke-width="0.6"/><text x="7" y="10" text-anchor="middle" font-family="Liberation Sans" font-style="italic" font-size="10" fill="#aaaaaa">a</text></svg></div>
<div class="" style="position:absolute;left:753px;top:278px;width:79px;height:17px;background:#fff;overflow:hidden"></div>
<div class="" style="position:absolute;left:833px;top:278px;width:119px;height:17px;background:#fff;overflow:hidden"><div class="t" style="left:1px;top:3px;letter-spacing:-0.363px;">Greg Smith</div></div>
<div class="" style="position:absolute;left:953px;top:278px;width:84px;height:17px;background:#fff;overflow:hidden"><div class="t" style="left:1px;top:3px;letter-spacing:-0.142px;">Not Posted</div></div>
<div class="" style="position:absolute;left:1038px;top:278px;width:39px;height:17px;background:#fff;overflow:hidden"><div class="cb g" style="left:14px;top:3px"></div></div>
<div class="" style="position:absolute;left:1078px;top:278px;width:39px;height:17px;background:#fff;overflow:hidden"><div class="cb g" style="left:14px;top:3px"></div></div>
<div class="" style="position:absolute;left:1118px;top:278px;width:39px;height:17px;background:#fff;overflow:hidden"><div class="cb g" style="left:14px;top:3px"></div></div>
<div class="" style="position:absolute;left:5px;top:296px;width:10px;height:17px;background:#f0f0f0;box-shadow:inset 1px 1px 0 #fff"></div>
<div class="hl" style="position:absolute;left:5px;top:313px;width:10px;height:1px;"></div>
<div class="" style="position:absolute;left:33px;top:296px;width:69px;height:17px;background:#fff;overflow:hidden"><div class="t" style="left:1px;top:3px;letter-spacing:-0.282px;">INV360</div></div>
<div class="" style="position:absolute;left:103px;top:296px;width:69px;height:17px;background:#fff;overflow:hidden"><div class="t" style="left:1px;top:3px;letter-spacing:-0.243px;">N-J581</div></div>
<div class="" style="position:absolute;left:173px;top:296px;width:179px;height:17px;background:#fff;overflow:hidden"><div class="t" style="left:1px;top:3px;letter-spacing:-0.091px;">Fox Corporation</div></div>
<div class="" style="position:absolute;left:353px;top:296px;width:64px;height:17px;background:#fff;overflow:hidden"><div class="t" style="left:1px;top:3px;letter-spacing:0.118px;">2/17/2016</div></div>
<div class="" style="position:absolute;left:418px;top:296px;width:69px;height:17px;background:#fff;overflow:hidden"></div>
<div class="" style="position:absolute;left:488px;top:296px;width:74px;height:17px;background:#fff;overflow:hidden"><div class="t r" style="left:0;top:3px;width:71px;letter-spacing:-0.105px;">$46,083.35</div></div>
<div class="" style="position:absolute;left:563px;top:296px;width:74px;height:17px;background:#fff;overflow:hidden"><div class="t r" style="left:0;top:3px;width:71px;letter-spacing:-0.104px;">$2,765.00</div></div>
<div class="" style="position:absolute;left:638px;top:296px;width:74px;height:17px;background:#fff;overflow:hidden"><div class="t r" style="left:0;top:3px;width:71px;letter-spacing:-0.105px;">$48,848.35</div></div>
<div class="" style="position:absolute;left:713px;top:296px;width:39px;height:17px;background:#fff;overflow:hidden"><svg width="16" height="13" viewBox="0 0 16 13" style="position:absolute;left:11px;top:2px"><path d="M0.5 0.5H12.5L15.5 3.5V12.5H0.5Z" fill="url(#ng)" stroke="#d6d6d6"/><path d="M12.5 0.5V3.5H15.5Z" fill="#ececec" stroke="#d9d9d9" stroke-width="0.6"/><text x="7" y="10" text-anchor="middle" font-family="Liberation Sans" font-style="italic" font-size="10" fill="#aaaaaa">a</text></svg></div>
<div class="" style="position:absolute;left:753px;top:296px;width:79px;height:17px;background:#fff;overflow:hidden"><div class="t" style="left:1px;top:3px;letter-spacing:-0.871px;">FOX</div></div>
<div class="" style="position:absolute;left:833px;top:296px;width:119px;height:17px;background:#fff;overflow:hidden"><div class="t" style="left:1px;top:3px;letter-spacing:-0.363px;">Greg Smith</div></div>
<div class="" style="position:absolute;left:953px;top:296px;width:84px;height:17px;background:#fff;overflow:hidden"><div class="t" style="left:1px;top:3px;letter-spacing:-0.142px;">Not Posted</div></div>
<div class="" style="position:absolute;left:1038px;top:296px;width:39px;height:17px;background:#fff;overflow:hidden"><div class="cb g" style="left:14px;top:3px"><svg class="ck" width="7" height="7" viewBox="0 0 7 7" shape-rendering="crispEdges"><path d="M0 2h1v3h-1zM1 3h1v3h-1zM2 4h1v3h-1zM3 3h1v3h-1zM4 2h1v3h-1zM5 1h1v3h-1zM6 0h1v3h-1z" fill="#000"/></svg></div></div>
<div class="" style="position:absolute;left:1078px;top:296px;width:39px;height:17px;background:#fff;overflow:hidden"><div class="cb g" style="left:14px;top:3px"></div></div>
<div class="" style="position:absolute;left:1118px;top:296px;width:39px;height:17px;background:#fff;overflow:hidden"><div class="cb g" style="left:14px;top:3px"></div></div>
<div class="" style="position:absolute;left:5px;top:314px;width:10px;height:17px;background:#f0f0f0;box-shadow:inset 1px 1px 0 #fff"></div>
<div class="hl" style="position:absolute;left:5px;top:331px;width:10px;height:1px;"></div>
<div class="" style="position:absolute;left:33px;top:314px;width:69px;height:17px;background:#fff;overflow:hidden"><div class="t" style="left:1px;top:3px;letter-spacing:-0.282px;">INV357</div></div>
<div class="" style="position:absolute;left:103px;top:314px;width:69px;height:17px;background:#fff;overflow:hidden"><div class="t" style="left:1px;top:3px;letter-spacing:-0.243px;">N-J577</div></div>
<div class="" style="position:absolute;left:173px;top:314px;width:179px;height:17px;background:#fff;overflow:hidden"><div class="t" style="left:1px;top:3px;letter-spacing:-0.091px;">Fox Corporation</div></div>
<div class="" style="position:absolute;left:353px;top:314px;width:64px;height:17px;background:#fff;overflow:hidden"><div class="t" style="left:1px;top:3px;letter-spacing:0.148px;">2/3/2016</div></div>
<div class="" style="position:absolute;left:418px;top:314px;width:69px;height:17px;background:#fff;overflow:hidden"></div>
<div class="" style="position:absolute;left:488px;top:314px;width:74px;height:17px;background:#fff;overflow:hidden"><div class="t r" style="left:0;top:3px;width:71px;letter-spacing:-0.105px;">$50,438.64</div></div>
<div class="" style="position:absolute;left:563px;top:314px;width:74px;height:17px;background:#fff;overflow:hidden"><div class="t r" style="left:0;top:3px;width:71px;letter-spacing:-0.104px;">$3,026.32</div></div>
<div class="" style="position:absolute;left:638px;top:314px;width:74px;height:17px;background:#fff;overflow:hidden"><div class="t r" style="left:0;top:3px;width:71px;letter-spacing:-0.105px;">$53,464.96</div></div>
<div class="" style="position:absolute;left:713px;top:314px;width:39px;height:17px;background:#fff;overflow:hidden"><svg width="16" height="13" viewBox="0 0 16 13" style="position:absolute;left:11px;top:2px"><path d="M0.5 0.5H12.5L15.5 3.5V12.5H0.5Z" fill="url(#ng)" stroke="#d6d6d6"/><path d="M12.5 0.5V3.5H15.5Z" fill="#ececec" stroke="#d9d9d9" stroke-width="0.6"/><text x="7" y="10" text-anchor="middle" font-family="Liberation Sans" font-style="italic" font-size="10" fill="#aaaaaa">a</text></svg></div>
<div class="" style="position:absolute;left:753px;top:314px;width:79px;height:17px;background:#fff;overflow:hidden"><div class="t" style="left:1px;top:3px;letter-spacing:-0.871px;">FOX</div></div>
<div class="" style="position:absolute;left:833px;top:314px;width:119px;height:17px;background:#fff;overflow:hidden"><div class="t" style="left:1px;top:3px;letter-spacing:-0.363px;">Greg Smith</div></div>
<div class="" style="position:absolute;left:953px;top:314px;width:84px;height:17px;background:#fff;overflow:hidden"><div class="t" style="left:1px;top:3px;letter-spacing:-0.208px;">Posted</div></div>
<div class="" style="position:absolute;left:1038px;top:314px;width:39px;height:17px;background:#fff;overflow:hidden"><div class="cb g" style="left:14px;top:3px"><svg class="ck" width="7" height="7" viewBox="0 0 7 7" shape-rendering="crispEdges"><path d="M0 2h1v3h-1zM1 3h1v3h-1zM2 4h1v3h-1zM3 3h1v3h-1zM4 2h1v3h-1zM5 1h1v3h-1zM6 0h1v3h-1z" fill="#000"/></svg></div></div>
<div class="" style="position:absolute;left:1078px;top:314px;width:39px;height:17px;background:#fff;overflow:hidden"><div class="cb g" style="left:14px;top:3px"></div></div>
<div class="" style="position:absolute;left:1118px;top:314px;width:39px;height:17px;background:#fff;overflow:hidden"><div class="cb g" style="left:14px;top:3px"></div></div>
<div class="" style="position:absolute;left:5px;top:332px;width:10px;height:17px;background:#f0f0f0;box-shadow:inset 1px 1px 0 #fff"></div>
<div class="hl" style="position:absolute;left:5px;top:349px;width:10px;height:1px;"></div>
<div class="" style="position:absolute;left:33px;top:332px;width:69px;height:17px;background:#fecdb7;overflow:hidden"><div class="t" style="left:1px;top:3px;letter-spacing:-0.282px;">INV358</div></div>
<div class="" style="position:absolute;left:103px;top:332px;width:69px;height:17px;background:#fecdb7;overflow:hidden"><div class="t" style="left:1px;top:3px;letter-spacing:-0.243px;">N-J576</div></div>
<div class="" style="position:absolute;left:173px;top:332px;width:179px;height:17px;background:#fecdb7;overflow:hidden"><div class="t" style="left:1px;top:3px;letter-spacing:-0.091px;">Fox Corporation</div></div>
<div class="" style="position:absolute;left:353px;top:332px;width:64px;height:17px;background:#fecdb7;overflow:hidden"><div class="t" style="left:1px;top:3px;letter-spacing:0.148px;">2/3/2016</div></div>
<div class="" style="position:absolute;left:418px;top:332px;width:69px;height:17px;background:#fecdb7;overflow:hidden"></div>
<div class="" style="position:absolute;left:488px;top:332px;width:74px;height:17px;background:#fecdb7;overflow:hidden"><div class="t r" style="left:0;top:3px;width:71px;letter-spacing:-0.104px;">$5,000.00</div></div>
<div class="" style="position:absolute;left:563px;top:332px;width:74px;height:17px;background:#fecdb7;overflow:hidden"><div class="t r" style="left:0;top:3px;width:71px;letter-spacing:-0.109px;">$500.00</div></div>
<div class="" style="position:absolute;left:638px;top:332px;width:74px;height:17px;background:#fecdb7;overflow:hidden"><div class="t r" style="left:0;top:3px;width:71px;letter-spacing:-0.104px;">$5,500.00</div></div>
<div class="" style="position:absolute;left:713px;top:332px;width:39px;height:17px;background:#fecdb7;overflow:hidden"><svg width="16" height="13" viewBox="0 0 16 13" style="position:absolute;left:11px;top:2px"><path d="M0.5 0.5H12.5L15.5 3.5V12.5H0.5Z" fill="url(#ng)" stroke="#d6d6d6"/><path d="M12.5 0.5V3.5H15.5Z" fill="#ececec" stroke="#d9d9d9" stroke-width="0.6"/><text x="7" y="10" text-anchor="middle" font-family="Liberation Sans" font-style="italic" font-size="10" fill="#aaaaaa">a</text></svg></div>
<div class="" style="position:absolute;left:753px;top:332px;width:79px;height:17px;background:#fecdb7;overflow:hidden"><div class="t" style="left:1px;top:3px;letter-spacing:-0.871px;">FOX</div></div>
<div class="" style="position:absolute;left:833px;top:332px;width:119px;height:17px;background:#fecdb7;overflow:hidden"><div class="t" style="left:1px;top:3px;letter-spacing:-0.363px;">Greg Smith</div></div>
<div class="" style="position:absolute;left:953px;top:332px;width:84px;height:17px;background:#fecdb7;overflow:hidden"><div class="t" style="left:1px;top:3px;letter-spacing:-0.208px;">Posted</div></div>
<div class="" style="position:absolute;left:1038px;top:332px;width:39px;height:17px;background:#fecdb7;overflow:hidden"><div class="cb g" style="left:14px;top:3px"><svg class="ck" width="7" height="7" viewBox="0 0 7 7" shape-rendering="crispEdges"><path d="M0 2h1v3h-1zM1 3h1v3h-1zM2 4h1v3h-1zM3 3h1v3h-1zM4 2h1v3h-1zM5 1h1v3h-1zM6 0h1v3h-1z" fill="#000"/></svg></div></div>
<div class="" style="position:absolute;left:1078px;top:332px;width:39px;height:17px;background:#fecdb7;overflow:hidden"><div class="cb g" style="left:14px;top:3px"></div></div>
<div class="" style="position:absolute;left:1118px;top:332px;width:39px;height:17px;background:#fecdb7;overflow:hidden"><div class="cb g" style="left:14px;top:3px"></div></div>
<div class="" style="position:absolute;left:5px;top:350px;width:10px;height:17px;background:#f0f0f0;box-shadow:inset 1px 1px 0 #fff"></div>
<div class="hl" style="position:absolute;left:5px;top:367px;width:10px;height:1px;"></div>
<div class="" style="position:absolute;left:33px;top:350px;width:69px;height:17px;background:#fecdb7;overflow:hidden"><div class="t" style="left:1px;top:3px;letter-spacing:-0.282px;">INV359</div></div>
<div class="" style="position:absolute;left:103px;top:350px;width:69px;height:17px;background:#fecdb7;overflow:hidden"><div class="t" style="left:1px;top:3px;letter-spacing:-0.243px;">N-J576</div></div>
<div class="" style="position:absolute;left:173px;top:350px;width:179px;height:17px;background:#fecdb7;overflow:hidden"><div class="t" style="left:1px;top:3px;letter-spacing:-0.091px;">Fox Corporation</div></div>
<div class="" style="position:absolute;left:353px;top:350px;width:64px;height:17px;background:#fecdb7;overflow:hidden"><div class="t" style="left:1px;top:3px;letter-spacing:0.148px;">2/3/2016</div></div>
<div class="" style="position:absolute;left:418px;top:350px;width:69px;height:17px;background:#fecdb7;overflow:hidden"></div>
<div class="" style="position:absolute;left:488px;top:350px;width:74px;height:17px;background:#fecdb7;overflow:hidden"><div class="t r" style="left:0;top:3px;width:71px;letter-spacing:-0.105px;">$13,038.70</div></div>
<div class="" style="position:absolute;left:563px;top:350px;width:74px;height:17px;background:#fecdb7;overflow:hidden"><div class="t r" style="left:0;top:3px;width:71px;letter-spacing:-0.104px;">$1,303.87</div></div>
<div class="" style="position:absolute;left:638px;top:350px;width:74px;height:17px;background:#fecdb7;overflow:hidden"><div class="t r" style="left:0;top:3px;width:71px;letter-spacing:-0.105px;">$14,342.57</div></div>
<div class="" style="position:absolute;left:713px;top:350px;width:39px;height:17px;background:#fecdb7;overflow:hidden"><svg width="16" height="13" viewBox="0 0 16 13" style="position:absolute;left:11px;top:2px"><path d="M0.5 0.5H12.5L15.5 3.5V12.5H0.5Z" fill="url(#ng)" stroke="#d6d6d6"/><path d="M12.5 0.5V3.5H15.5Z" fill="#ececec" stroke="#d9d9d9" stroke-width="0.6"/><text x="7" y="10" text-anchor="middle" font-family="Liberation Sans" font-style="italic" font-size="10" fill="#aaaaaa">a</text></svg></div>
<div class="" style="position:absolute;left:753px;top:350px;width:79px;height:17px;background:#fecdb7;overflow:hidden"><div class="t" style="left:1px;top:3px;letter-spacing:-0.871px;">FOX</div></div>
<div class="" style="position:absolute;left:833px;top:350px;width:119px;height:17px;background:#fecdb7;overflow:hidden"><div class="t" style="left:1px;top:3px;letter-spacing:-0.363px;">Greg Smith</div></div>
<div class="" style="position:absolute;left:953px;top:350px;width:84px;height:17px;background:#fecdb7;overflow:hidden"><div class="t" style="left:1px;top:3px;letter-spacing:-0.208px;">Posted</div></div>
<div class="" style="position:absolute;left:1038px;top:350px;width:39px;height:17px;background:#fecdb7;overflow:hidden"><div class="cb g" style="left:14px;top:3px"><svg class="ck" width="7" height="7" viewBox="0 0 7 7" shape-rendering="crispEdges"><path d="M0 2h1v3h-1zM1 3h1v3h-1zM2 4h1v3h-1zM3 3h1v3h-1zM4 2h1v3h-1zM5 1h1v3h-1zM6 0h1v3h-1z" fill="#000"/></svg></div></div>
<div class="" style="position:absolute;left:1078px;top:350px;width:39px;height:17px;background:#fecdb7;overflow:hidden"><div class="cb g" style="left:14px;top:3px"></div></div>
<div class="" style="position:absolute;left:1118px;top:350px;width:39px;height:17px;background:#fecdb7;overflow:hidden"><div class="cb g" style="left:14px;top:3px"></div></div>
<div class="" style="position:absolute;left:5px;top:368px;width:10px;height:17px;background:#f0f0f0;box-shadow:inset 1px 1px 0 #fff"></div>
<div class="hl" style="position:absolute;left:5px;top:385px;width:10px;height:1px;"></div>
<div class="" style="position:absolute;left:33px;top:368px;width:69px;height:17px;background:#fff;overflow:hidden"><div class="t" style="left:1px;top:3px;letter-spacing:-0.282px;">INV353</div></div>
<div class="" style="position:absolute;left:103px;top:368px;width:69px;height:17px;background:#fff;overflow:hidden"><div class="t" style="left:1px;top:3px;letter-spacing:-0.243px;">N-J574</div></div>
<div class="" style="position:absolute;left:173px;top:368px;width:179px;height:17px;background:#fff;overflow:hidden"><div class="t" style="left:1px;top:3px;letter-spacing:-0.091px;">Fox Corporation</div></div>
<div class="" style="position:absolute;left:353px;top:368px;width:64px;height:17px;background:#fff;overflow:hidden"><div class="t" style="left:1px;top:3px;letter-spacing:0.118px;">1/25/2016</div></div>
<div class="" style="position:absolute;left:418px;top:368px;width:69px;height:17px;background:#fff;overflow:hidden"></div>
<div class="" style="position:absolute;left:488px;top:368px;width:74px;height:17px;background:#fff;overflow:hidden"><div class="t r" style="left:0;top:3px;width:71px;letter-spacing:-0.105px;">$50,097.25</div></div>
<div class="" style="position:absolute;left:563px;top:368px;width:74px;height:17px;background:#fff;overflow:hidden"><div class="t r" style="left:0;top:3px;width:71px;letter-spacing:-0.104px;">$3,005.84</div></div>
<div class="" style="position:absolute;left:638px;top:368px;width:74px;height:17px;background:#fff;overflow:hidden"><div class="t r" style="left:0;top:3px;width:71px;letter-spacing:-0.105px;">$53,103.09</div></div>
<div class="" style="position:absolute;left:713px;top:368px;width:39px;height:17px;background:#fff;overflow:hidden"><svg width="16" height="13" viewBox="0 0 16 13" style="position:absolute;left:11px;top:2px"><path d="M0.5 0.5H12.5L15.5 3.5V12.5H0.5Z" fill="url(#ng)" stroke="#d6d6d6"/><path d="M12.5 0.5V3.5H15.5Z" fill="#ececec" stroke="#d9d9d9" stroke-width="0.6"/><text x="7" y="10" text-anchor="middle" font-family="Liberation Sans" font-style="italic" font-size="10" fill="#aaaaaa">a</text></svg></div>
<div class="" style="position:absolute;left:753px;top:368px;width:79px;height:17px;background:#fff;overflow:hidden"><div class="t" style="left:1px;top:3px;letter-spacing:-0.871px;">FOX</div></div>
<div class="" style="position:absolute;left:833px;top:368px;width:119px;height:17px;background:#fff;overflow:hidden"><div class="t" style="left:1px;top:3px;letter-spacing:-0.363px;">Greg Smith</div></div>
<div class="" style="position:absolute;left:953px;top:368px;width:84px;height:17px;background:#fff;overflow:hidden"><div class="t" style="left:1px;top:3px;letter-spacing:-0.208px;">Posted</div></div>
<div class="" style="position:absolute;left:1038px;top:368px;width:39px;height:17px;background:#fff;overflow:hidden"><div class="cb g" style="left:14px;top:3px"><svg class="ck" width="7" height="7" viewBox="0 0 7 7" shape-rendering="crispEdges"><path d="M0 2h1v3h-1zM1 3h1v3h-1zM2 4h1v3h-1zM3 3h1v3h-1zM4 2h1v3h-1zM5 1h1v3h-1zM6 0h1v3h-1z" fill="#000"/></svg></div></div>
<div class="" style="position:absolute;left:1078px;top:368px;width:39px;height:17px;background:#fff;overflow:hidden"><div class="cb g" style="left:14px;top:3px"></div></div>
<div class="" style="position:absolute;left:1118px;top:368px;width:39px;height:17px;background:#fff;overflow:hidden"><div class="cb g" style="left:14px;top:3px"></div></div>
<div class="" style="position:absolute;left:5px;top:386px;width:10px;height:17px;background:#f0f0f0;box-shadow:inset 1px 1px 0 #fff"></div>
<div class="hl" style="position:absolute;left:5px;top:403px;width:10px;height:1px;"></div>
<div class="" style="position:absolute;left:33px;top:386px;width:69px;height:17px;background:#fff;overflow:hidden"><div class="t" style="left:1px;top:3px;letter-spacing:-0.282px;">INV354</div></div>
<div class="" style="position:absolute;left:103px;top:386px;width:69px;height:17px;background:#fff;overflow:hidden"><div class="t" style="left:1px;top:3px;letter-spacing:-0.243px;">N-J569</div></div>
<div class="" style="position:absolute;left:173px;top:386px;width:179px;height:17px;background:#fff;overflow:hidden"><div class="t" style="left:1px;top:3px;letter-spacing:-0.144px;">d'light Lighting &amp; Staging</div></div>
<div class="" style="position:absolute;left:353px;top:386px;width:64px;height:17px;background:#fff;overflow:hidden"><div class="t" style="left:1px;top:3px;letter-spacing:0.118px;">1/25/2016</div></div>
<div class="" style="position:absolute;left:418px;top:386px;width:69px;height:17px;background:#fff;overflow:hidden"></div>
<div class="" style="position:absolute;left:488px;top:386px;width:74px;height:17px;background:#fff;overflow:hidden"><div class="t r" style="left:0;top:3px;width:71px;letter-spacing:-0.105px;">$0.00</div></div>
<div class="" style="position:absolute;left:563px;top:386px;width:74px;height:17px;background:#fff;overflow:hidden"><div class="t r" style="left:0;top:3px;width:71px;letter-spacing:-0.105px;">$0.00</div></div>
<div class="" style="position:absolute;left:638px;top:386px;width:74px;height:17px;background:#fff;overflow:hidden"><div class="t r" style="left:0;top:3px;width:71px;letter-spacing:-0.105px;">$0.00</div></div>
<div class="" style="position:absolute;left:713px;top:386px;width:39px;height:17px;background:#fff;overflow:hidden"><svg width="16" height="13" viewBox="0 0 16 13" style="position:absolute;left:11px;top:2px"><path d="M0.5 0.5H12.5L15.5 3.5V12.5H0.5Z" fill="url(#ng)" stroke="#d6d6d6"/><path d="M12.5 0.5V3.5H15.5Z" fill="#ececec" stroke="#d9d9d9" stroke-width="0.6"/><text x="7" y="10" text-anchor="middle" font-family="Liberation Sans" font-style="italic" font-size="10" fill="#aaaaaa">a</text></svg></div>
<div class="" style="position:absolute;left:753px;top:386px;width:79px;height:17px;background:#fff;overflow:hidden"></div>
<div class="" style="position:absolute;left:833px;top:386px;width:119px;height:17px;background:#fff;overflow:hidden"><div class="t" style="left:1px;top:3px;letter-spacing:-0.363px;">Greg Smith</div></div>
<div class="" style="position:absolute;left:953px;top:386px;width:84px;height:17px;background:#fff;overflow:hidden"><div class="t" style="left:1px;top:3px;letter-spacing:-0.208px;">Posted</div></div>
<div class="" style="position:absolute;left:1038px;top:386px;width:39px;height:17px;background:#fff;overflow:hidden"><div class="cb g" style="left:14px;top:3px"><svg class="ck" width="7" height="7" viewBox="0 0 7 7" shape-rendering="crispEdges"><path d="M0 2h1v3h-1zM1 3h1v3h-1zM2 4h1v3h-1zM3 3h1v3h-1zM4 2h1v3h-1zM5 1h1v3h-1zM6 0h1v3h-1z" fill="#000"/></svg></div></div>
<div class="" style="position:absolute;left:1078px;top:386px;width:39px;height:17px;background:#fff;overflow:hidden"><div class="cb g" style="left:14px;top:3px"></div></div>
<div class="" style="position:absolute;left:1118px;top:386px;width:39px;height:17px;background:#fff;overflow:hidden"><div class="cb g" style="left:14px;top:3px"></div></div>
<div class="" style="position:absolute;left:5px;top:404px;width:10px;height:17px;background:#f0f0f0;box-shadow:inset 1px 1px 0 #fff"></div>
<div class="hl" style="position:absolute;left:5px;top:421px;width:10px;height:1px;"></div>
<div class="" style="position:absolute;left:33px;top:404px;width:69px;height:17px;background:#fff;overflow:hidden"><div class="t" style="left:1px;top:3px;letter-spacing:-0.282px;">INV355</div></div>
<div class="" style="position:absolute;left:103px;top:404px;width:69px;height:17px;background:#fff;overflow:hidden"><div class="t" style="left:1px;top:3px;letter-spacing:-0.243px;">N-J569</div></div>
<div class="" style="position:absolute;left:173px;top:404px;width:179px;height:17px;background:#fff;overflow:hidden"><div class="t" style="left:1px;top:3px;letter-spacing:-0.144px;">d'light Lighting &amp; Staging</div></div>
<div class="" style="position:absolute;left:353px;top:404px;width:64px;height:17px;background:#fff;overflow:hidden"><div class="t" style="left:1px;top:3px;letter-spacing:0.118px;">1/25/2016</div></div>
<div class="" style="position:absolute;left:418px;top:404px;width:69px;height:17px;background:#fff;overflow:hidden"></div>
<div class="" style="position:absolute;left:488px;top:404px;width:74px;height:17px;background:#fff;overflow:hidden"><div class="t r" style="left:0;top:3px;width:71px;letter-spacing:-0.105px;">$0.00</div></div>
<div class="" style="position:absolute;left:563px;top:404px;width:74px;height:17px;background:#fff;overflow:hidden"><div class="t r" style="left:0;top:3px;width:71px;letter-spacing:-0.105px;">$0.00</div></div>
<div class="" style="position:absolute;left:638px;top:404px;width:74px;height:17px;background:#fff;overflow:hidden"><div class="t r" style="left:0;top:3px;width:71px;letter-spacing:-0.105px;">$0.00</div></div>
<div class="" style="position:absolute;left:713px;top:404px;width:39px;height:17px;background:#fff;overflow:hidden"><svg width="16" height="13" viewBox="0 0 16 13" style="position:absolute;left:11px;top:2px"><path d="M0.5 0.5H12.5L15.5 3.5V12.5H0.5Z" fill="url(#ng)" stroke="#d6d6d6"/><path d="M12.5 0.5V3.5H15.5Z" fill="#ececec" stroke="#d9d9d9" stroke-width="0.6"/><text x="7" y="10" text-anchor="middle" font-family="Liberation Sans" font-style="italic" font-size="10" fill="#aaaaaa">a</text></svg></div>
<div class="" style="position:absolute;left:753px;top:404px;width:79px;height:17px;background:#fff;overflow:hidden"></div>
<div class="" style="position:absolute;left:833px;top:404px;width:119px;height:17px;background:#fff;overflow:hidden"><div class="t" style="left:1px;top:3px;letter-spacing:-0.363px;">Greg Smith</div></div>
<div class="" style="position:absolute;left:953px;top:404px;width:84px;height:17px;background:#fff;overflow:hidden"><div class="t" style="left:1px;top:3px;letter-spacing:-0.208px;">Posted</div></div>
<div class="" style="position:absolute;left:1038px;top:404px;width:39px;height:17px;background:#fff;overflow:hidden"><div class="cb g" style="left:14px;top:3px"><svg class="ck" width="7" height="7" viewBox="0 0 7 7" shape-rendering="crispEdges"><path d="M0 2h1v3h-1zM1 3h1v3h-1zM2 4h1v3h-1zM3 3h1v3h-1zM4 2h1v3h-1zM5 1h1v3h-1zM6 0h1v3h-1z" fill="#000"/></svg></div></div>
<div class="" style="position:absolute;left:1078px;top:404px;width:39px;height:17px;background:#fff;overflow:hidden"><div class="cb g" style="left:14px;top:3px"></div></div>
<div class="" style="position:absolute;left:1118px;top:404px;width:39px;height:17px;background:#fff;overflow:hidden"><div class="cb g" style="left:14px;top:3px"></div></div>
<div class="" style="position:absolute;left:5px;top:422px;width:10px;height:17px;background:#f0f0f0;box-shadow:inset 1px 1px 0 #fff"></div>
<div class="hl" style="position:absolute;left:5px;top:439px;width:10px;height:1px;"></div>
<div class="" style="position:absolute;left:33px;top:422px;width:69px;height:17px;background:#fecdb7;overflow:hidden"><div class="t" style="left:1px;top:3px;letter-spacing:-0.282px;">INV356</div></div>
<div class="" style="position:absolute;left:103px;top:422px;width:69px;height:17px;background:#fecdb7;overflow:hidden"><div class="t" style="left:1px;top:3px;letter-spacing:-0.243px;">N-J572</div></div>
<div class="" style="position:absolute;left:173px;top:422px;width:179px;height:17px;background:#fecdb7;overflow:hidden"><div class="t" style="left:1px;top:3px;letter-spacing:-0.091px;">Fox Corporation</div></div>
<div class="" style="position:absolute;left:353px;top:422px;width:64px;height:17px;background:#fecdb7;overflow:hidden"><div class="t" style="left:1px;top:3px;letter-spacing:0.118px;">1/25/2016</div></div>
<div class="" style="position:absolute;left:418px;top:422px;width:69px;height:17px;background:#fecdb7;overflow:hidden"></div>
<div class="" style="position:absolute;left:488px;top:422px;width:74px;height:17px;background:#fecdb7;overflow:hidden"><div class="t r" style="left:0;top:3px;width:71px;letter-spacing:-0.105px;">$0.00</div></div>
<div class="" style="position:absolute;left:563px;top:422px;width:74px;height:17px;background:#fecdb7;overflow:hidden"><div class="t r" style="left:0;top:3px;width:71px;letter-spacing:-0.105px;">$0.00</div></div>
<div class="" style="position:absolute;left:638px;top:422px;width:74px;height:17px;background:#fecdb7;overflow:hidden"><div class="t r" style="left:0;top:3px;width:71px;letter-spacing:-0.105px;">$0.00</div></div>
<div class="" style="position:absolute;left:713px;top:422px;width:39px;height:17px;background:#fecdb7;overflow:hidden"><svg width="16" height="13" viewBox="0 0 16 13" style="position:absolute;left:11px;top:2px"><path d="M0.5 0.5H12.5L15.5 3.5V12.5H0.5Z" fill="url(#ng)" stroke="#d6d6d6"/><path d="M12.5 0.5V3.5H15.5Z" fill="#ececec" stroke="#d9d9d9" stroke-width="0.6"/><text x="7" y="10" text-anchor="middle" font-family="Liberation Sans" font-style="italic" font-size="10" fill="#aaaaaa">a</text></svg></div>
<div class="" style="position:absolute;left:753px;top:422px;width:79px;height:17px;background:#fecdb7;overflow:hidden"><div class="t" style="left:1px;top:3px;letter-spacing:-0.871px;">FOX</div></div>
<div class="" style="position:absolute;left:833px;top:422px;width:119px;height:17px;background:#fecdb7;overflow:hidden"><div class="t" style="left:1px;top:3px;letter-spacing:-0.363px;">Greg Smith</div></div>
<div class="" style="position:absolute;left:953px;top:422px;width:84px;height:17px;background:#fecdb7;overflow:hidden"><div class="t" style="left:1px;top:3px;letter-spacing:-0.208px;">Posted</div></div>
<div class="" style="position:absolute;left:1038px;top:422px;width:39px;height:17px;background:#fecdb7;overflow:hidden"><div class="cb g" style="left:14px;top:3px"><svg class="ck" width="7" height="7" viewBox="0 0 7 7" shape-rendering="crispEdges"><path d="M0 2h1v3h-1zM1 3h1v3h-1zM2 4h1v3h-1zM3 3h1v3h-1zM4 2h1v3h-1zM5 1h1v3h-1zM6 0h1v3h-1z" fill="#000"/></svg></div></div>
<div class="" style="position:absolute;left:1078px;top:422px;width:39px;height:17px;background:#fecdb7;overflow:hidden"><div class="cb g" style="left:14px;top:3px"></div></div>
<div class="" style="position:absolute;left:1118px;top:422px;width:39px;height:17px;background:#fecdb7;overflow:hidden"><div class="cb g" style="left:14px;top:3px"></div></div>
<div class="" style="position:absolute;left:5px;top:440px;width:10px;height:17px;background:#f0f0f0;box-shadow:inset 1px 1px 0 #fff"></div>
<div class="hl" style="position:absolute;left:5px;top:457px;width:10px;height:1px;"></div>
<div class="" style="position:absolute;left:33px;top:440px;width:69px;height:17px;background:#fff;overflow:hidden"><div class="t" style="left:1px;top:3px;letter-spacing:-0.282px;">INV350</div></div>
<div class="" style="position:absolute;left:103px;top:440px;width:69px;height:17px;background:#fff;overflow:hidden"><div class="t" style="left:1px;top:3px;letter-spacing:-0.213px;">J331</div></div>
<div class="" style="position:absolute;left:173px;top:440px;width:179px;height:17px;background:#fff;overflow:hidden"><div class="t" style="left:1px;top:3px;letter-spacing:-0.170px;">Masque Sound &amp; Recording Corporation</div></div>
<div class="" style="position:absolute;left:353px;top:440px;width:64px;height:17px;background:#fff;overflow:hidden"><div class="t" style="left:1px;top:3px;letter-spacing:0.148px;">1/6/2016</div></div>
<div class="" style="position:absolute;left:418px;top:440px;width:69px;height:17px;background:#fff;overflow:hidden"><div class="t" style="left:1px;top:3px;letter-spacing:-0.383px;">XG07271761</div></div>
<div class="" style="position:absolute;left:488px;top:440px;width:74px;height:17px;background:#fff;overflow:hidden"><div class="t r" style="left:0;top:3px;width:71px;letter-spacing:-0.107px;">$80.00</div></div>
<div class="" style="position:absolute;left:563px;top:440px;width:74px;height:17px;background:#fff;overflow:hidden"><div class="t r" style="left:0;top:3px;width:71px;letter-spacing:-0.105px;">$4.80</div></div>
<div class="" style="position:absolute;left:638px;top:440px;width:74px;height:17px;background:#fff;overflow:hidden"><div class="t r" style="left:0;top:3px;width:71px;letter-spacing:-0.107px;">$84.80</div></div>
<div class="" style="position:absolute;left:713px;top:440px;width:39px;height:17px;background:#fff;overflow:hidden"><svg width="16" height="13" viewBox="0 0 16 13" style="position:absolute;left:11px;top:2px"><path d="M0.5 0.5H12.5L15.5 3.5V12.5H0.5Z" fill="url(#ng)" stroke="#d6d6d6"/><path d="M12.5 0.5V3.5H15.5Z" fill="#ececec" stroke="#d9d9d9" stroke-width="0.6"/><text x="7" y="10" text-anchor="middle" font-family="Liberation Sans" font-style="italic" font-size="10" fill="#aaaaaa">a</text></svg></div>
<div class="" style="position:absolute;left:753px;top:440px;width:79px;height:17px;background:#fff;overflow:hidden"><div class="t" style="left:1px;top:3px;letter-spacing:-0.685px;">MSQ</div></div>
<div class="" style="position:absolute;left:833px;top:440px;width:119px;height:17px;background:#fff;overflow:hidden"><div class="t" style="left:1px;top:3px;letter-spacing:-0.363px;">Greg Smith</div></div>
<div class="" style="position:absolute;left:953px;top:440px;width:84px;height:17px;background:#fff;overflow:hidden"><div class="t" style="left:1px;top:3px;letter-spacing:-0.208px;">Posted</div></div>
<div class="" style="position:absolute;left:1038px;top:440px;width:39px;height:17px;background:#fff;overflow:hidden"><div class="cb g" style="left:14px;top:3px"><svg class="ck" width="7" height="7" viewBox="0 0 7 7" shape-rendering="crispEdges"><path d="M0 2h1v3h-1zM1 3h1v3h-1zM2 4h1v3h-1zM3 3h1v3h-1zM4 2h1v3h-1zM5 1h1v3h-1zM6 0h1v3h-1z" fill="#000"/></svg></div></div>
<div class="" style="position:absolute;left:1078px;top:440px;width:39px;height:17px;background:#fff;overflow:hidden"><div class="cb g" style="left:14px;top:3px"></div></div>
<div class="" style="position:absolute;left:1118px;top:440px;width:39px;height:17px;background:#fff;overflow:hidden"><div class="cb g" style="left:14px;top:3px"></div></div>
<div class="" style="position:absolute;left:5px;top:458px;width:10px;height:17px;background:#f0f0f0;box-shadow:inset 1px 1px 0 #fff"></div>
<div class="hl" style="position:absolute;left:5px;top:475px;width:10px;height:1px;"></div>
<div class="" style="position:absolute;left:33px;top:458px;width:69px;height:17px;background:#fff;overflow:hidden"><div class="t" style="left:1px;top:3px;letter-spacing:-0.282px;">INV351</div></div>
<div class="" style="position:absolute;left:103px;top:458px;width:69px;height:17px;background:#fff;overflow:hidden"><div class="t" style="left:1px;top:3px;letter-spacing:-0.243px;">N-J568</div></div>
<div class="" style="position:absolute;left:173px;top:458px;width:179px;height:17px;background:#fff;overflow:hidden"><div class="t" style="left:1px;top:3px;letter-spacing:-0.091px;">Fox Corporation</div></div>
<div class="" style="position:absolute;left:353px;top:458px;width:64px;height:17px;background:#fff;overflow:hidden"><div class="t" style="left:1px;top:3px;letter-spacing:0.148px;">1/6/2016</div></div>
<div class="" style="position:absolute;left:418px;top:458px;width:69px;height:17px;background:#fff;overflow:hidden"></div>
<div class="" style="position:absolute;left:488px;top:458px;width:74px;height:17px;background:#fff;overflow:hidden"><div class="t r" style="left:0;top:3px;width:71px;letter-spacing:-0.105px;">$22,967.48</div></div>
<div class="" style="position:absolute;left:563px;top:458px;width:74px;height:17px;background:#fff;overflow:hidden"><div class="t r" style="left:0;top:3px;width:71px;letter-spacing:-0.104px;">$1,378.05</div></div>
<div class="" style="position:absolute;left:638px;top:458px;width:74px;height:17px;background:#fff;overflow:hidden"><div class="t r" style="left:0;top:3px;width:71px;letter-spacing:-0.105px;">$24,345.53</div></div>
<div class="" style="position:absolute;left:713px;top:458px;width:39px;height:17px;background:#fff;overflow:hidden"><svg width="16" height="13" viewBox="0 0 16 13" style="position:absolute;left:11px;top:2px"><path d="M0.5 0.5H12.5L15.5 3.5V12.5H0.5Z" fill="url(#ng)" stroke="#d6d6d6"/><path d="M12.5 0.5V3.5H15.5Z" fill="#ececec" stroke="#d9d9d9" stroke-width="0.6"/><text x="7" y="10" text-anchor="middle" font-family="Liberation Sans" font-style="italic" font-size="10" fill="#aaaaaa">a</text></svg></div>
<div class="" style="position:absolute;left:753px;top:458px;width:79px;height:17px;background:#fff;overflow:hidden"><div class="t" style="left:1px;top:3px;letter-spacing:-0.871px;">FOX</div></div>
<div class="" style="position:absolute;left:833px;top:458px;width:119px;height:17px;background:#fff;overflow:hidden"><div class="t" style="left:1px;top:3px;letter-spacing:-0.363px;">Greg Smith</div></div>
<div class="" style="position:absolute;left:953px;top:458px;width:84px;height:17px;background:#fff;overflow:hidden"><div class="t" style="left:1px;top:3px;letter-spacing:-0.208px;">Posted</div></div>
<div class="" style="position:absolute;left:1038px;top:458px;width:39px;height:17px;background:#fff;overflow:hidden"><div class="cb g" style="left:14px;top:3px"><svg class="ck" width="7" height="7" viewBox="0 0 7 7" shape-rendering="crispEdges"><path d="M0 2h1v3h-1zM1 3h1v3h-1zM2 4h1v3h-1zM3 3h1v3h-1zM4 2h1v3h-1zM5 1h1v3h-1zM6 0h1v3h-1z" fill="#000"/></svg></div></div>
<div class="" style="position:absolute;left:1078px;top:458px;width:39px;height:17px;background:#fff;overflow:hidden"><div class="cb g" style="left:14px;top:3px"></div></div>
<div class="" style="position:absolute;left:1118px;top:458px;width:39px;height:17px;background:#fff;overflow:hidden"><div class="cb g" style="left:14px;top:3px"></div></div>
<div class="" style="position:absolute;left:5px;top:476px;width:10px;height:17px;background:#f0f0f0;box-shadow:inset 1px 1px 0 #fff"></div>
<div class="hl" style="position:absolute;left:5px;top:493px;width:10px;height:1px;"></div>
<div class="" style="position:absolute;left:33px;top:476px;width:69px;height:17px;background:#fff;overflow:hidden"><div class="t" style="left:1px;top:3px;letter-spacing:-0.282px;">INV352</div></div>
<div class="" style="position:absolute;left:103px;top:476px;width:69px;height:17px;background:#fff;overflow:hidden"><div class="t" style="left:1px;top:3px;letter-spacing:-0.243px;">N-J568</div></div>
<div class="" style="position:absolute;left:173px;top:476px;width:179px;height:17px;background:#fff;overflow:hidden"><div class="t" style="left:1px;top:3px;letter-spacing:-0.091px;">Fox Corporation</div></div>
<div class="" style="position:absolute;left:353px;top:476px;width:64px;height:17px;background:#fff;overflow:hidden"><div class="t" style="left:1px;top:3px;letter-spacing:0.148px;">1/6/2016</div></div>
<div class="" style="position:absolute;left:418px;top:476px;width:69px;height:17px;background:#fff;overflow:hidden"></div>
<div class="" style="position:absolute;left:488px;top:476px;width:74px;height:17px;background:#fff;overflow:hidden"><div class="t r" style="left:0;top:3px;width:71px;letter-spacing:-0.109px;">$138.87</div></div>
<div class="" style="position:absolute;left:563px;top:476px;width:74px;height:17px;background:#fff;overflow:hidden"><div class="t r" style="left:0;top:3px;width:71px;letter-spacing:-0.105px;">$8.33</div></div>
<div class="" style="position:absolute;left:638px;top:476px;width:74px;height:17px;background:#fff;overflow:hidden"><div class="t r" style="left:0;top:3px;width:71px;letter-spacing:-0.109px;">$147.20</div></div>
<div class="" style="position:absolute;left:713px;top:476px;width:39px;height:17px;background:#fff;overflow:hidden"><svg width="16" height="13" viewBox="0 0 16 13" style="position:absolute;left:11px;top:2px"><path d="M0.5 0.5H12.5L15.5 3.5V12.5H0.5Z" fill="url(#ng)" stroke="#d6d6d6"/><path d="M12.5 0.5V3.5H15.5Z" fill="#ececec" stroke="#d9d9d9" stroke-width="0.6"/><text x="7" y="10" text-anchor="middle" font-family="Liberation Sans" font-style="italic" font-size="10" fill="#aaaaaa">a</text></svg></div>
<div class="" style="position:absolute;left:753px;top:476px;width:79px;height:17px;background:#fff;overflow:hidden"><div class="t" style="left:1px;top:3px;letter-spacing:-0.871px;">FOX</div></div>
<div class="" style="position:absolute;left:833px;top:476px;width:119px;height:17px;background:#fff;overflow:hidden"><div class="t" style="left:1px;top:3px;letter-spacing:-0.363px;">Greg Smith</div></div>
<div class="" style="position:absolute;left:953px;top:476px;width:84px;height:17px;background:#fff;overflow:hidden"><div class="t" style="left:1px;top:3px;letter-spacing:-0.208px;">Posted</div></div>
<div class="" style="position:absolute;left:1038px;top:476px;width:39px;height:17px;background:#fff;overflow:hidden"><div class="cb g" style="left:14px;top:3px"><svg class="ck" width="7" height="7" viewBox="0 0 7 7" shape-rendering="crispEdges"><path d="M0 2h1v3h-1zM1 3h1v3h-1zM2 4h1v3h-1zM3 3h1v3h-1zM4 2h1v3h-1zM5 1h1v3h-1zM6 0h1v3h-1z" fill="#000"/></svg></div></div>
<div class="" style="position:absolute;left:1078px;top:476px;width:39px;height:17px;background:#fff;overflow:hidden"><div class="cb g" style="left:14px;top:3px"></div></div>
<div class="" style="position:absolute;left:1118px;top:476px;width:39px;height:17px;background:#fff;overflow:hidden"><div class="cb g" style="left:14px;top:3px"></div></div>
<div class="" style="position:absolute;left:5px;top:494px;width:10px;height:17px;background:#f0f0f0;box-shadow:inset 1px 1px 0 #fff"></div>
<div class="hl" style="position:absolute;left:5px;top:511px;width:10px;height:1px;"></div>
<div class="" style="position:absolute;left:33px;top:494px;width:69px;height:17px;background:#fecdb7;overflow:hidden"><div class="t" style="left:1px;top:3px;letter-spacing:-0.282px;">INV348</div></div>
<div class="" style="position:absolute;left:103px;top:494px;width:69px;height:17px;background:#fecdb7;overflow:hidden"><div class="t" style="left:1px;top:3px;letter-spacing:-0.213px;">J350</div></div>
<div class="" style="position:absolute;left:173px;top:494px;width:179px;height:17px;background:#fecdb7;overflow:hidden"><div class="t" style="left:1px;top:3px;letter-spacing:-0.091px;">Fox Corporation</div></div>
<div class="" style="position:absolute;left:353px;top:494px;width:64px;height:17px;background:#fecdb7;overflow:hidden"><div class="t" style="left:1px;top:3px;letter-spacing:0.095px;">12/30/2015</div></div>
<div class="" style="position:absolute;left:418px;top:494px;width:69px;height:17px;background:#fecdb7;overflow:hidden"></div>
<div class="" style="position:absolute;left:488px;top:494px;width:74px;height:17px;background:#fecdb7;overflow:hidden"><div class="t r" style="left:0;top:3px;width:71px;letter-spacing:-0.105px;">$0.00</div></div>
<div class="" style="position:absolute;left:563px;top:494px;width:74px;height:17px;background:#fecdb7;overflow:hidden"><div class="t r" style="left:0;top:3px;width:71px;letter-spacing:-0.105px;">$0.00</div></div>
<div class="" style="position:absolute;left:638px;top:494px;width:74px;height:17px;background:#fecdb7;overflow:hidden"><div class="t r" style="left:0;top:3px;width:71px;letter-spacing:-0.105px;">$0.00</div></div>
<div class="" style="position:absolute;left:713px;top:494px;width:39px;height:17px;background:#fecdb7;overflow:hidden"><svg width="16" height="13" viewBox="0 0 16 13" style="position:absolute;left:11px;top:2px"><path d="M0.5 0.5H12.5L15.5 3.5V12.5H0.5Z" fill="url(#ng)" stroke="#d6d6d6"/><path d="M12.5 0.5V3.5H15.5Z" fill="#ececec" stroke="#d9d9d9" stroke-width="0.6"/><text x="7" y="10" text-anchor="middle" font-family="Liberation Sans" font-style="italic" font-size="10" fill="#aaaaaa">a</text></svg></div>
<div class="" style="position:absolute;left:753px;top:494px;width:79px;height:17px;background:#fecdb7;overflow:hidden"><div class="t" style="left:1px;top:3px;letter-spacing:-0.871px;">FOX</div></div>
<div class="" style="position:absolute;left:833px;top:494px;width:119px;height:17px;background:#fecdb7;overflow:hidden"><div class="t" style="left:1px;top:3px;letter-spacing:-0.363px;">Greg Smith</div></div>
<div class="" style="position:absolute;left:953px;top:494px;width:84px;height:17px;background:#fecdb7;overflow:hidden"><div class="t" style="left:1px;top:3px;letter-spacing:-0.142px;">Not Posted</div></div>
<div class="" style="position:absolute;left:1038px;top:494px;width:39px;height:17px;background:#fecdb7;overflow:hidden"><div class="cb g" style="left:14px;top:3px"><svg class="ck" width="7" height="7" viewBox="0 0 7 7" shape-rendering="crispEdges"><path d="M0 2h1v3h-1zM1 3h1v3h-1zM2 4h1v3h-1zM3 3h1v3h-1zM4 2h1v3h-1zM5 1h1v3h-1zM6 0h1v3h-1z" fill="#000"/></svg></div></div>
<div class="" style="position:absolute;left:1078px;top:494px;width:39px;height:17px;background:#fecdb7;overflow:hidden"><div class="cb g" style="left:14px;top:3px"></div></div>
<div class="" style="position:absolute;left:1118px;top:494px;width:39px;height:17px;background:#fecdb7;overflow:hidden"><div class="cb g" style="left:14px;top:3px"></div></div>
<div class="" style="position:absolute;left:5px;top:512px;width:10px;height:17px;background:#f0f0f0;box-shadow:inset 1px 1px 0 #fff"></div>
<div class="hl" style="position:absolute;left:5px;top:529px;width:10px;height:1px;"></div>
<div class="" style="position:absolute;left:33px;top:512px;width:69px;height:17px;background:#fecdb7;overflow:hidden"><div class="t" style="left:1px;top:3px;letter-spacing:-0.282px;">INV349</div></div>
<div class="" style="position:absolute;left:103px;top:512px;width:69px;height:17px;background:#fecdb7;overflow:hidden"><div class="t" style="left:1px;top:3px;letter-spacing:-0.213px;">J350</div></div>
<div class="" style="position:absolute;left:173px;top:512px;width:179px;height:17px;background:#fecdb7;overflow:hidden"><div class="t" style="left:1px;top:3px;letter-spacing:-0.091px;">Fox Corporation</div></div>
<div class="" style="position:absolute;left:353px;top:512px;width:64px;height:17px;background:#fecdb7;overflow:hidden"><div class="t" style="left:1px;top:3px;letter-spacing:0.095px;">12/30/2015</div></div>
<div class="" style="position:absolute;left:418px;top:512px;width:69px;height:17px;background:#fecdb7;overflow:hidden"></div>
<div class="" style="position:absolute;left:488px;top:512px;width:74px;height:17px;background:#fecdb7;overflow:hidden"><div class="t r" style="left:0;top:3px;width:71px;letter-spacing:-0.105px;">$0.00</div></div>
<div class="" style="position:absolute;left:563px;top:512px;width:74px;height:17px;background:#fecdb7;overflow:hidden"><div class="t r" style="left:0;top:3px;width:71px;letter-spacing:-0.105px;">$0.00</div></div>
<div class="" style="position:absolute;left:638px;top:512px;width:74px;height:17px;background:#fecdb7;overflow:hidden"><div class="t r" style="left:0;top:3px;width:71px;letter-spacing:-0.105px;">$0.00</div></div>
<div class="" style="position:absolute;left:713px;top:512px;width:39px;height:17px;background:#fecdb7;overflow:hidden"><svg width="16" height="13" viewBox="0 0 16 13" style="position:absolute;left:11px;top:2px"><path d="M0.5 0.5H12.5L15.5 3.5V12.5H0.5Z" fill="url(#ng)" stroke="#d6d6d6"/><path d="M12.5 0.5V3.5H15.5Z" fill="#ececec" stroke="#d9d9d9" stroke-width="0.6"/><text x="7" y="10" text-anchor="middle" font-family="Liberation Sans" font-style="italic" font-size="10" fill="#aaaaaa">a</text></svg></div>
<div class="" style="position:absolute;left:753px;top:512px;width:79px;height:17px;background:#fecdb7;overflow:hidden"><div class="t" style="left:1px;top:3px;letter-spacing:-0.871px;">FOX</div></div>
<div class="" style="position:absolute;left:833px;top:512px;width:119px;height:17px;background:#fecdb7;overflow:hidden"><div class="t" style="left:1px;top:3px;letter-spacing:-0.363px;">Greg Smith</div></div>
<div class="" style="position:absolute;left:953px;top:512px;width:84px;height:17px;background:#fecdb7;overflow:hidden"><div class="t" style="left:1px;top:3px;letter-spacing:-0.142px;">Not Posted</div></div>
<div class="" style="position:absolute;left:1038px;top:512px;width:39px;height:17px;background:#fecdb7;overflow:hidden"><div class="cb g" style="left:14px;top:3px"><svg class="ck" width="7" height="7" viewBox="0 0 7 7" shape-rendering="crispEdges"><path d="M0 2h1v3h-1zM1 3h1v3h-1zM2 4h1v3h-1zM3 3h1v3h-1zM4 2h1v3h-1zM5 1h1v3h-1zM6 0h1v3h-1z" fill="#000"/></svg></div></div>
<div class="" style="position:absolute;left:1078px;top:512px;width:39px;height:17px;background:#fecdb7;overflow:hidden"><div class="cb g" style="left:14px;top:3px"></div></div>
<div class="" style="position:absolute;left:1118px;top:512px;width:39px;height:17px;background:#fecdb7;overflow:hidden"><div class="cb g" style="left:14px;top:3px"></div></div>
<div class="" style="position:absolute;left:5px;top:530px;width:10px;height:17px;background:#f0f0f0;box-shadow:inset 1px 1px 0 #fff"></div>
<div class="hl" style="position:absolute;left:5px;top:547px;width:10px;height:1px;"></div>
<div class="" style="position:absolute;left:33px;top:530px;width:69px;height:17px;background:#fff;overflow:hidden"><div class="t" style="left:1px;top:3px;letter-spacing:-0.282px;">INV346</div></div>
<div class="" style="position:absolute;left:103px;top:530px;width:69px;height:17px;background:#fff;overflow:hidden"><div class="t" style="left:1px;top:3px;letter-spacing:-0.243px;">N-J566</div></div>
<div class="" style="position:absolute;left:173px;top:530px;width:179px;height:17px;background:#fff;overflow:hidden"><div class="t" style="left:1px;top:3px;letter-spacing:-0.091px;">Fox Corporation</div></div>
<div class="" style="position:absolute;left:353px;top:530px;width:64px;height:17px;background:#fff;overflow:hidden"><div class="t" style="left:1px;top:3px;letter-spacing:0.118px;">12/4/2015</div></div>
<div class="" style="position:absolute;left:418px;top:530px;width:69px;height:17px;background:#fff;overflow:hidden"></div>
<div class="" style="position:absolute;left:488px;top:530px;width:74px;height:17px;background:#fff;overflow:hidden"><div class="t r" style="left:0;top:3px;width:71px;letter-spacing:-0.105px;">$0.00</div></div>
<div class="" style="position:absolute;left:563px;top:530px;width:74px;height:17px;background:#fff;overflow:hidden"><div class="t r" style="left:0;top:3px;width:71px;letter-spacing:-0.105px;">$0.00</div></div>
<div class="" style="position:absolute;left:638px;top:530px;width:74px;height:17px;background:#fff;overflow:hidden"><div class="t r" style="left:0;top:3px;width:71px;letter-spacing:-0.105px;">$0.00</div></div>
<div class="" style="position:absolute;left:713px;top:530px;width:39px;height:17px;background:#fff;overflow:hidden"><svg width="16" height="13" viewBox="0 0 16 13" style="position:absolute;left:11px;top:2px"><path d="M0.5 0.5H12.5L15.5 3.5V12.5H0.5Z" fill="url(#ng)" stroke="#d6d6d6"/><path d="M12.5 0.5V3.5H15.5Z" fill="#ececec" stroke="#d9d9d9" stroke-width="0.6"/><text x="7" y="10" text-anchor="middle" font-family="Liberation Sans" font-style="italic" font-size="10" fill="#aaaaaa">a</text></svg></div>
<div class="" style="position:absolute;left:753px;top:530px;width:79px;height:17px;background:#fff;overflow:hidden"><div class="t" style="left:1px;top:3px;letter-spacing:-0.871px;">FOX</div></div>
<div class="" style="position:absolute;left:833px;top:530px;width:119px;height:17px;background:#fff;overflow:hidden"><div class="t" style="left:1px;top:3px;letter-spacing:-0.363px;">Greg Smith</div></div>
<div class="" style="position:absolute;left:953px;top:530px;width:84px;height:17px;background:#fff;overflow:hidden"><div class="t" style="left:1px;top:3px;letter-spacing:-0.142px;">Not Posted</div></div>
<div class="" style="position:absolute;left:1038px;top:530px;width:39px;height:17px;background:#fff;overflow:hidden"><div class="cb g" style="left:14px;top:3px"><svg class="ck" width="7" height="7" viewBox="0 0 7 7" shape-rendering="crispEdges"><path d="M0 2h1v3h-1zM1 3h1v3h-1zM2 4h1v3h-1zM3 3h1v3h-1zM4 2h1v3h-1zM5 1h1v3h-1zM6 0h1v3h-1z" fill="#000"/></svg></div></div>
<div class="" style="position:absolute;left:1078px;top:530px;width:39px;height:17px;background:#fff;overflow:hidden"><div class="cb g" style="left:14px;top:3px"></div></div>
<div class="" style="position:absolute;left:1118px;top:530px;width:39px;height:17px;background:#fff;overflow:hidden"><div class="cb g" style="left:14px;top:3px"></div></div>
<div class="" style="position:absolute;left:5px;top:548px;width:10px;height:17px;background:#f0f0f0;box-shadow:inset 1px 1px 0 #fff"></div>
<div class="hl" style="position:absolute;left:5px;top:565px;width:10px;height:1px;"></div>
<div class="" style="position:absolute;left:33px;top:548px;width:69px;height:17px;background:#fff;overflow:hidden"><div class="t" style="left:1px;top:3px;letter-spacing:-0.282px;">INV347</div></div>
<div class="" style="position:absolute;left:103px;top:548px;width:69px;height:17px;background:#fff;overflow:hidden"><div class="t" style="left:1px;top:3px;letter-spacing:-0.243px;">N-J566</div></div>
<div class="" style="position:absolute;left:173px;top:548px;width:179px;height:17px;background:#fff;overflow:hidden"><div class="t" style="left:1px;top:3px;letter-spacing:-0.091px;">Fox Corporation</div></div>
<div class="" style="position:absolute;left:353px;top:548px;width:64px;height:17px;background:#fff;overflow:hidden"><div class="t" style="left:1px;top:3px;letter-spacing:0.118px;">12/4/2015</div></div>
<div class="" style="position:absolute;left:418px;top:548px;width:69px;height:17px;background:#fff;overflow:hidden"></div>
<div class="" style="position:absolute;left:488px;top:548px;width:74px;height:17px;background:#fff;overflow:hidden"><div class="t r" style="left:0;top:3px;width:71px;letter-spacing:-0.105px;">$0.00</div></div>
<div class="" style="position:absolute;left:563px;top:548px;width:74px;height:17px;background:#fff;overflow:hidden"><div class="t r" style="left:0;top:3px;width:71px;letter-spacing:-0.105px;">$0.00</div></div>
<div class="" style="position:absolute;left:638px;top:548px;width:74px;height:17px;background:#fff;overflow:hidden"><div class="t r" style="left:0;top:3px;width:71px;letter-spacing:-0.105px;">$0.00</div></div>
<div class="" style="position:absolute;left:713px;top:548px;width:39px;height:17px;background:#fff;overflow:hidden"><svg width="16" height="13" viewBox="0 0 16 13" style="position:absolute;left:11px;top:2px"><path d="M0.5 0.5H12.5L15.5 3.5V12.5H0.5Z" fill="url(#ng)" stroke="#d6d6d6"/><path d="M12.5 0.5V3.5H15.5Z" fill="#ececec" stroke="#d9d9d9" stroke-width="0.6"/><text x="7" y="10" text-anchor="middle" font-family="Liberation Sans" font-style="italic" font-size="10" fill="#aaaaaa">a</text></svg></div>
<div class="" style="position:absolute;left:753px;top:548px;width:79px;height:17px;background:#fff;overflow:hidden"><div class="t" style="left:1px;top:3px;letter-spacing:-0.871px;">FOX</div></div>
<div class="" style="position:absolute;left:833px;top:548px;width:119px;height:17px;background:#fff;overflow:hidden"><div class="t" style="left:1px;top:3px;letter-spacing:-0.363px;">Greg Smith</div></div>
<div class="" style="position:absolute;left:953px;top:548px;width:84px;height:17px;background:#fff;overflow:hidden"><div class="t" style="left:1px;top:3px;letter-spacing:-0.142px;">Not Posted</div></div>
<div class="" style="position:absolute;left:1038px;top:548px;width:39px;height:17px;background:#fff;overflow:hidden"><div class="cb g" style="left:14px;top:3px"><svg class="ck" width="7" height="7" viewBox="0 0 7 7" shape-rendering="crispEdges"><path d="M0 2h1v3h-1zM1 3h1v3h-1zM2 4h1v3h-1zM3 3h1v3h-1zM4 2h1v3h-1zM5 1h1v3h-1zM6 0h1v3h-1z" fill="#000"/></svg></div></div>
<div class="" style="position:absolute;left:1078px;top:548px;width:39px;height:17px;background:#fff;overflow:hidden"><div class="cb g" style="left:14px;top:3px"></div></div>
<div class="" style="position:absolute;left:1118px;top:548px;width:39px;height:17px;background:#fff;overflow:hidden"><div class="cb g" style="left:14px;top:3px"></div></div>
<div class="" style="position:absolute;left:5px;top:566px;width:10px;height:17px;background:#f0f0f0;box-shadow:inset 1px 1px 0 #fff"></div>
<div class="hl" style="position:absolute;left:5px;top:583px;width:10px;height:1px;"></div>
<div class="" style="position:absolute;left:33px;top:566px;width:69px;height:17px;background:#fff;overflow:hidden"><div class="t" style="left:1px;top:3px;letter-spacing:-0.282px;">INV343</div></div>
<div class="" style="position:absolute;left:103px;top:566px;width:69px;height:17px;background:#fff;overflow:hidden"><div class="t" style="left:1px;top:3px;letter-spacing:-0.243px;">N-J566</div></div>
<div class="" style="position:absolute;left:173px;top:566px;width:179px;height:17px;background:#fff;overflow:hidden"><div class="t" style="left:1px;top:3px;letter-spacing:-0.091px;">Fox Corporation</div></div>
<div class="" style="position:absolute;left:353px;top:566px;width:64px;height:17px;background:#fff;overflow:hidden"><div class="t" style="left:1px;top:3px;letter-spacing:0.118px;">12/2/2015</div></div>
<div class="" style="position:absolute;left:418px;top:566px;width:69px;height:17px;background:#fff;overflow:hidden"></div>
<div class="" style="position:absolute;left:488px;top:566px;width:74px;height:17px;background:#fff;overflow:hidden"><div class="t r" style="left:0;top:3px;width:71px;letter-spacing:-0.105px;">$0.00</div></div>
<div class="" style="position:absolute;left:563px;top:566px;width:74px;height:17px;background:#fff;overflow:hidden"><div class="t r" style="left:0;top:3px;width:71px;letter-spacing:-0.105px;">$0.00</div></div>
<div class="" style="position:absolute;left:638px;top:566px;width:74px;height:17px;background:#fff;overflow:hidden"><div class="t r" style="left:0;top:3px;width:71px;letter-spacing:-0.105px;">$0.00</div></div>
<div class="" style="position:absolute;left:713px;top:566px;width:39px;height:17px;background:#fff;overflow:hidden"><svg width="16" height="13" viewBox="0 0 16 13" style="position:absolute;left:11px;top:2px"><path d="M0.5 0.5H12.5L15.5 3.5V12.5H0.5Z" fill="url(#ng)" stroke="#d6d6d6"/><path d="M12.5 0.5V3.5H15.5Z" fill="#ececec" stroke="#d9d9d9" stroke-width="0.6"/><text x="7" y="10" text-anchor="middle" font-family="Liberation Sans" font-style="italic" font-size="10" fill="#aaaaaa">a</text></svg></div>
<div class="" style="position:absolute;left:753px;top:566px;width:79px;height:17px;background:#fff;overflow:hidden"><div class="t" style="left:1px;top:3px;letter-spacing:-0.871px;">FOX</div></div>
<div class="" style="position:absolute;left:833px;top:566px;width:119px;height:17px;background:#fff;overflow:hidden"><div class="t" style="left:1px;top:3px;letter-spacing:-0.363px;">Greg Smith</div></div>
<div class="" style="position:absolute;left:953px;top:566px;width:84px;height:17px;background:#fff;overflow:hidden"><div class="t" style="left:1px;top:3px;letter-spacing:-0.142px;">Not Posted</div></div>
<div class="" style="position:absolute;left:1038px;top:566px;width:39px;height:17px;background:#fff;overflow:hidden"><div class="cb g" style="left:14px;top:3px"><svg class="ck" width="7" height="7" viewBox="0 0 7 7" shape-rendering="crispEdges"><path d="M0 2h1v3h-1zM1 3h1v3h-1zM2 4h1v3h-1zM3 3h1v3h-1zM4 2h1v3h-1zM5 1h1v3h-1zM6 0h1v3h-1z" fill="#000"/></svg></div></div>
<div class="" style="position:absolute;left:1078px;top:566px;width:39px;height:17px;background:#fff;overflow:hidden"><div class="cb g" style="left:14px;top:3px"></div></div>
<div class="" style="position:absolute;left:1118px;top:566px;width:39px;height:17px;background:#fff;overflow:hidden"><div class="cb g" style="left:14px;top:3px"></div></div>
<div class="" style="position:absolute;left:5px;top:584px;width:10px;height:17px;background:#f0f0f0;box-shadow:inset 1px 1px 0 #fff"></div>
<div class="hl" style="position:absolute;left:5px;top:601px;width:10px;height:1px;"></div>
<div class="" style="position:absolute;left:33px;top:584px;width:69px;height:17px;background:#fff;overflow:hidden"><div class="t" style="left:1px;top:3px;letter-spacing:-0.282px;">INV344</div></div>
<div class="" style="position:absolute;left:103px;top:584px;width:69px;height:17px;background:#fff;overflow:hidden"><div class="t" style="left:1px;top:3px;letter-spacing:-0.243px;">N-J568</div></div>
<div class="" style="position:absolute;left:173px;top:584px;width:179px;height:17px;background:#fff;overflow:hidden"><div class="t" style="left:1px;top:3px;letter-spacing:-0.248px;">FVP+ Productions</div></div>
<div class="" style="position:absolute;left:353px;top:584px;width:64px;height:17px;background:#fff;overflow:hidden"><div class="t" style="left:1px;top:3px;letter-spacing:0.118px;">12/2/2015</div></div>
<div class="" style="position:absolute;left:418px;top:584px;width:69px;height:17px;background:#fff;overflow:hidden"></div>
<div class="" style="position:absolute;left:488px;top:584px;width:74px;height:17px;background:#fff;overflow:hidden"><div class="t r" style="left:0;top:3px;width:71px;letter-spacing:-0.105px;">$0.00</div></div>
<div class="" style="position:absolute;left:563px;top:584px;width:74px;height:17px;background:#fff;overflow:hidden"><div class="t r" style="left:0;top:3px;width:71px;letter-spacing:-0.105px;">$0.00</div></div>
<div class="" style="position:absolute;left:638px;top:584px;width:74px;height:17px;background:#fff;overflow:hidden"><div class="t r" style="left:0;top:3px;width:71px;letter-spacing:-0.105px;">$0.00</div></div>
<div class="" style="position:absolute;left:713px;top:584px;width:39px;height:17px;background:#fff;overflow:hidden"><svg width="16" height="13" viewBox="0 0 16 13" style="position:absolute;left:11px;top:2px"><path d="M0.5 0.5H12.5L15.5 3.5V12.5H0.5Z" fill="url(#ng)" stroke="#d6d6d6"/><path d="M12.5 0.5V3.5H15.5Z" fill="#ececec" stroke="#d9d9d9" stroke-width="0.6"/><text x="7" y="10" text-anchor="middle" font-family="Liberation Sans" font-style="italic" font-size="10" fill="#aaaaaa">a</text></svg></div>
<div class="" style="position:absolute;left:753px;top:584px;width:79px;height:17px;background:#fff;overflow:hidden"><div class="t" style="left:1px;top:3px;letter-spacing:-0.454px;">FVP+</div></div>
<div class="" style="position:absolute;left:833px;top:584px;width:119px;height:17px;background:#fff;overflow:hidden"><div class="t" style="left:1px;top:3px;letter-spacing:-0.363px;">Greg Smith</div></div>
<div class="" style="position:absolute;left:953px;top:584px;width:84px;height:17px;background:#fff;overflow:hidden"><div class="t" style="left:1px;top:3px;letter-spacing:-0.142px;">Not Posted</div></div>
<div class="" style="position:absolute;left:1038px;top:584px;width:39px;height:17px;background:#fff;overflow:hidden"><div class="cb g" style="left:14px;top:3px"><svg class="ck" width="7" height="7" viewBox="0 0 7 7" shape-rendering="crispEdges"><path d="M0 2h1v3h-1zM1 3h1v3h-1zM2 4h1v3h-1zM3 3h1v3h-1zM4 2h1v3h-1zM5 1h1v3h-1zM6 0h1v3h-1z" fill="#000"/></svg></div></div>
<div class="" style="position:absolute;left:1078px;top:584px;width:39px;height:17px;background:#fff;overflow:hidden"><div class="cb g" style="left:14px;top:3px"></div></div>
<div class="" style="position:absolute;left:1118px;top:584px;width:39px;height:17px;background:#fff;overflow:hidden"><div class="cb g" style="left:14px;top:3px"></div></div>
<div class="" style="position:absolute;left:5px;top:602px;width:10px;height:17px;background:#f0f0f0;box-shadow:inset 1px 1px 0 #fff"></div>
<div class="hl" style="position:absolute;left:5px;top:619px;width:10px;height:1px;"></div>
<div class="" style="position:absolute;left:33px;top:602px;width:69px;height:17px;background:#fff;overflow:hidden"><div class="t" style="left:1px;top:3px;letter-spacing:-0.282px;">INV345</div></div>
<div class="" style="position:absolute;left:103px;top:602px;width:69px;height:17px;background:#fff;overflow:hidden"><div class="t" style="left:1px;top:3px;letter-spacing:-0.243px;">N-J568</div></div>
<div class="" style="position:absolute;left:173px;top:602px;width:179px;height:17px;background:#fff;overflow:hidden"><div class="t" style="left:1px;top:3px;letter-spacing:-0.248px;">FVP+ Productions</div></div>
<div class="" style="position:absolute;left:353px;top:602px;width:64px;height:17px;background:#fff;overflow:hidden"><div class="t" style="left:1px;top:3px;letter-spacing:0.118px;">12/2/2015</div></div>
<div class="" style="position:absolute;left:418px;top:602px;width:69px;height:17px;background:#fff;overflow:hidden"></div>
<div class="" style="position:absolute;left:488px;top:602px;width:74px;height:17px;background:#fff;overflow:hidden"><div class="t r" style="left:0;top:3px;width:71px;letter-spacing:-0.105px;">$0.00</div></div>
<div class="" style="position:absolute;left:563px;top:602px;width:74px;height:17px;background:#fff;overflow:hidden"><div class="t r" style="left:0;top:3px;width:71px;letter-spacing:-0.105px;">$0.00</div></div>
<div class="" style="position:absolute;left:638px;top:602px;width:74px;height:17px;background:#fff;overflow:hidden"><div class="t r" style="left:0;top:3px;width:71px;letter-spacing:-0.105px;">$0.00</div></div>
<div class="" style="position:absolute;left:713px;top:602px;width:39px;height:17px;background:#fff;overflow:hidden"><svg width="16" height="13" viewBox="0 0 16 13" style="position:absolute;left:11px;top:2px"><path d="M0.5 0.5H12.5L15.5 3.5V12.5H0.5Z" fill="url(#ng)" stroke="#d6d6d6"/><path d="M12.5 0.5V3.5H15.5Z" fill="#ececec" stroke="#d9d9d9" stroke-width="0.6"/><text x="7" y="10" text-anchor="middle" font-family="Liberation Sans" font-style="italic" font-size="10" fill="#aaaaaa">a</text></svg></div>
<div class="" style="position:absolute;left:753px;top:602px;width:79px;height:17px;background:#fff;overflow:hidden"><div class="t" style="left:1px;top:3px;letter-spacing:-0.454px;">FVP+</div></div>
<div class="" style="position:absolute;left:833px;top:602px;width:119px;height:17px;background:#fff;overflow:hidden"><div class="t" style="left:1px;top:3px;letter-spacing:-0.363px;">Greg Smith</div></div>
<div class="" style="position:absolute;left:953px;top:602px;width:84px;height:17px;background:#fff;overflow:hidden"><div class="t" style="left:1px;top:3px;letter-spacing:-0.176px;">Sent To Accounts</div></div>
<div class="" style="position:absolute;left:1038px;top:602px;width:39px;height:17px;background:#fff;overflow:hidden"><div class="cb g" style="left:14px;top:3px"><svg class="ck" width="7" height="7" viewBox="0 0 7 7" shape-rendering="crispEdges"><path d="M0 2h1v3h-1zM1 3h1v3h-1zM2 4h1v3h-1zM3 3h1v3h-1zM4 2h1v3h-1zM5 1h1v3h-1zM6 0h1v3h-1z" fill="#000"/></svg></div></div>
<div class="" style="position:absolute;left:1078px;top:602px;width:39px;height:17px;background:#fff;overflow:hidden"><div class="cb g" style="left:14px;top:3px"></div></div>
<div class="" style="position:absolute;left:1118px;top:602px;width:39px;height:17px;background:#fff;overflow:hidden"><div class="cb g" style="left:14px;top:3px"></div></div>
<div class="" style="position:absolute;left:5px;top:620px;width:10px;height:17px;background:#f0f0f0;box-shadow:inset 1px 1px 0 #fff"></div>
<div class="hl" style="position:absolute;left:5px;top:637px;width:10px;height:1px;"></div>
<div class="" style="position:absolute;left:33px;top:620px;width:69px;height:17px;background:#fff;overflow:hidden"><div class="t" style="left:1px;top:3px;letter-spacing:-0.282px;">INV338</div></div>
<div class="" style="position:absolute;left:103px;top:620px;width:69px;height:17px;background:#fff;overflow:hidden"><div class="t" style="left:1px;top:3px;letter-spacing:-0.243px;">N-J563</div></div>
<div class="" style="position:absolute;left:173px;top:620px;width:179px;height:17px;background:#fff;overflow:hidden"><div class="t" style="left:1px;top:3px;letter-spacing:-0.091px;">Fox Corporation</div></div>
<div class="" style="position:absolute;left:353px;top:620px;width:64px;height:17px;background:#fff;overflow:hidden"><div class="t" style="left:1px;top:3px;letter-spacing:0.118px;">11/9/2015</div></div>
<div class="" style="position:absolute;left:418px;top:620px;width:69px;height:17px;background:#fff;overflow:hidden"></div>
<div class="" style="position:absolute;left:488px;top:620px;width:74px;height:17px;background:#fff;overflow:hidden"><div class="t r" style="left:0;top:3px;width:71px;letter-spacing:-0.105px;">$33,428.60</div></div>
<div class="" style="position:absolute;left:563px;top:620px;width:74px;height:17px;background:#fff;overflow:hidden"><div class="t r" style="left:0;top:3px;width:71px;letter-spacing:-0.104px;">$3,342.86</div></div>
<div class="" style="position:absolute;left:638px;top:620px;width:74px;height:17px;background:#fff;overflow:hidden"><div class="t r" style="left:0;top:3px;width:71px;letter-spacing:-0.105px;">$36,771.46</div></div>
<div class="" style="position:absolute;left:713px;top:620px;width:39px;height:17px;background:#fff;overflow:hidden"><svg width="16" height="13" viewBox="0 0 16 13" style="position:absolute;left:11px;top:2px"><path d="M0.5 0.5H12.5L15.5 3.5V12.5H0.5Z" fill="url(#ng)" stroke="#d6d6d6"/><path d="M12.5 0.5V3.5H15.5Z" fill="#ececec" stroke="#d9d9d9" stroke-width="0.6"/><text x="7" y="10" text-anchor="middle" font-family="Liberation Sans" font-style="italic" font-size="10" fill="#aaaaaa">a</text></svg></div>
<div class="" style="position:absolute;left:753px;top:620px;width:79px;height:17px;background:#fff;overflow:hidden"><div class="t" style="left:1px;top:3px;letter-spacing:-0.871px;">FOX</div></div>
<div class="" style="position:absolute;left:833px;top:620px;width:119px;height:17px;background:#fff;overflow:hidden"><div class="t" style="left:1px;top:3px;letter-spacing:-0.363px;">Greg Smith</div></div>
<div class="" style="position:absolute;left:953px;top:620px;width:84px;height:17px;background:#fff;overflow:hidden"><div class="t" style="left:1px;top:3px;letter-spacing:-0.142px;">Not Posted</div></div>
<div class="" style="position:absolute;left:1038px;top:620px;width:39px;height:17px;background:#fff;overflow:hidden"><div class="cb g" style="left:14px;top:3px"><svg class="ck" width="7" height="7" viewBox="0 0 7 7" shape-rendering="crispEdges"><path d="M0 2h1v3h-1zM1 3h1v3h-1zM2 4h1v3h-1zM3 3h1v3h-1zM4 2h1v3h-1zM5 1h1v3h-1zM6 0h1v3h-1z" fill="#000"/></svg></div></div>
<div class="" style="position:absolute;left:1078px;top:620px;width:39px;height:17px;background:#fff;overflow:hidden"><div class="cb g" style="left:14px;top:3px"></div></div>
<div class="" style="position:absolute;left:1118px;top:620px;width:39px;height:17px;background:#fff;overflow:hidden"><div class="cb g" style="left:14px;top:3px"></div></div>
<div class="" style="position:absolute;left:5px;top:638px;width:10px;height:17px;background:#f0f0f0;box-shadow:inset 1px 1px 0 #fff"></div>
<div class="hl" style="position:absolute;left:5px;top:655px;width:10px;height:1px;"></div>
<div class="" style="position:absolute;left:33px;top:638px;width:69px;height:17px;background:#fff;overflow:hidden"><div class="t" style="left:1px;top:3px;letter-spacing:-0.282px;">INV339</div></div>
<div class="" style="position:absolute;left:103px;top:638px;width:69px;height:17px;background:#fff;overflow:hidden"><div class="t" style="left:1px;top:3px;letter-spacing:-0.243px;">N-J563</div></div>
<div class="" style="position:absolute;left:173px;top:638px;width:179px;height:17px;background:#fff;overflow:hidden"><div class="t" style="left:1px;top:3px;letter-spacing:-0.091px;">Fox Corporation</div></div>
<div class="" style="position:absolute;left:353px;top:638px;width:64px;height:17px;background:#fff;overflow:hidden"><div class="t" style="left:1px;top:3px;letter-spacing:0.118px;">11/9/2015</div></div>
<div class="" style="position:absolute;left:418px;top:638px;width:69px;height:17px;background:#fff;overflow:hidden"></div>
<div class="" style="position:absolute;left:488px;top:638px;width:74px;height:17px;background:#fff;overflow:hidden"><div class="t r" style="left:0;top:3px;width:71px;letter-spacing:-0.109px;">$450.00</div></div>
<div class="" style="position:absolute;left:563px;top:638px;width:74px;height:17px;background:#fff;overflow:hidden"><div class="t r" style="left:0;top:3px;width:71px;letter-spacing:-0.107px;">$45.00</div></div>
<div class="" style="position:absolute;left:638px;top:638px;width:74px;height:17px;background:#fff;overflow:hidden"><div class="t r" style="left:0;top:3px;width:71px;letter-spacing:-0.109px;">$495.00</div></div>
<div class="" style="position:absolute;left:713px;top:638px;width:39px;height:17px;background:#fff;overflow:hidden"><svg width="16" height="13" viewBox="0 0 16 13" style="position:absolute;left:11px;top:2px"><path d="M0.5 0.5H12.5L15.5 3.5V12.5H0.5Z" fill="url(#ng)" stroke="#d6d6d6"/><path d="M12.5 0.5V3.5H15.5Z" fill="#ececec" stroke="#d9d9d9" stroke-width="0.6"/><text x="7" y="10" text-anchor="middle" font-family="Liberation Sans" font-style="italic" font-size="10" fill="#aaaaaa">a</text></svg></div>
<div class="" style="position:absolute;left:753px;top:638px;width:79px;height:17px;background:#fff;overflow:hidden"><div class="t" style="left:1px;top:3px;letter-spacing:-0.871px;">FOX</div></div>
<div class="" style="position:absolute;left:833px;top:638px;width:119px;height:17px;background:#fff;overflow:hidden"><div class="t" style="left:1px;top:3px;letter-spacing:-0.363px;">Greg Smith</div></div>
<div class="" style="position:absolute;left:953px;top:638px;width:84px;height:17px;background:#fff;overflow:hidden"><div class="t" style="left:1px;top:3px;letter-spacing:-0.142px;">Not Posted</div></div>
<div class="" style="position:absolute;left:1038px;top:638px;width:39px;height:17px;background:#fff;overflow:hidden"><div class="cb g" style="left:14px;top:3px"></div></div>
<div class="" style="position:absolute;left:1078px;top:638px;width:39px;height:17px;background:#fff;overflow:hidden"><div class="cb g" style="left:14px;top:3px"></div></div>
<div class="" style="position:absolute;left:1118px;top:638px;width:39px;height:17px;background:#fff;overflow:hidden"><div class="cb g" style="left:14px;top:3px"></div></div>
<div class="" style="position:absolute;left:5px;top:656px;width:10px;height:17px;background:#f0f0f0;box-shadow:inset 1px 1px 0 #fff"></div>
<div class="hl" style="position:absolute;left:5px;top:673px;width:10px;height:1px;"></div>
<div class="" style="position:absolute;left:33px;top:656px;width:69px;height:17px;background:#fff;overflow:hidden"><div class="t" style="left:1px;top:3px;letter-spacing:-0.282px;">INV340</div></div>
<div class="" style="position:absolute;left:103px;top:656px;width:69px;height:17px;background:#fff;overflow:hidden"><div class="t" style="left:1px;top:3px;letter-spacing:-0.243px;">N-J564</div></div>
<div class="" style="position:absolute;left:173px;top:656px;width:179px;height:17px;background:#fff;overflow:hidden"><div class="t" style="left:1px;top:3px;letter-spacing:-0.145px;">A-1 Audio</div></div>
<div class="" style="position:absolute;left:353px;top:656px;width:64px;height:17px;background:#fff;overflow:hidden"><div class="t" style="left:1px;top:3px;letter-spacing:0.118px;">11/9/2015</div></div>
<div class="" style="position:absolute;left:418px;top:656px;width:69px;height:17px;background:#fff;overflow:hidden"></div>
<div class="" style="position:absolute;left:488px;top:656px;width:74px;height:17px;background:#fff;overflow:hidden"><div class="t r" style="left:0;top:3px;width:71px;letter-spacing:-0.104px;">$1,000.00</div></div>
<div class="" style="position:absolute;left:563px;top:656px;width:74px;height:17px;background:#fff;overflow:hidden"><div class="t r" style="left:0;top:3px;width:71px;letter-spacing:-0.105px;">$0.00</div></div>
<div class="" style="position:absolute;left:638px;top:656px;width:74px;height:17px;background:#fff;overflow:hidden"><div class="t r" style="left:0;top:3px;width:71px;letter-spacing:-0.104px;">$1,000.00</div></div>
<div class="" style="position:absolute;left:713px;top:656px;width:39px;height:17px;background:#fff;overflow:hidden"><svg width="16" height="13" viewBox="0 0 16 13" style="position:absolute;left:11px;top:2px"><path d="M0.5 0.5H12.5L15.5 3.5V12.5H0.5Z" fill="url(#ng)" stroke="#d6d6d6"/><path d="M12.5 0.5V3.5H15.5Z" fill="#ececec" stroke="#d9d9d9" stroke-width="0.6"/><text x="7" y="10" text-anchor="middle" font-family="Liberation Sans" font-style="italic" font-size="10" fill="#aaaaaa">a</text></svg></div>
<div class="" style="position:absolute;left:753px;top:656px;width:79px;height:17px;background:#fff;overflow:hidden"><div class="t" style="left:1px;top:3px;letter-spacing:-0.327px;">A1AUDIO</div></div>
<div class="" style="position:absolute;left:833px;top:656px;width:119px;height:17px;background:#fff;overflow:hidden"><div class="t" style="left:1px;top:3px;letter-spacing:-0.363px;">Greg Smith</div></div>
<div class="" style="position:absolute;left:953px;top:656px;width:84px;height:17px;background:#fff;overflow:hidden"><div class="t" style="left:1px;top:3px;letter-spacing:-0.142px;">Not Posted</div></div>
<div class="" style="position:absolute;left:1038px;top:656px;width:39px;height:17px;background:#fff;overflow:hidden"><div class="cb g" style="left:14px;top:3px"><svg class="ck" width="7" height="7" viewBox="0 0 7 7" shape-rendering="crispEdges"><path d="M0 2h1v3h-1zM1 3h1v3h-1zM2 4h1v3h-1zM3 3h1v3h-1zM4 2h1v3h-1zM5 1h1v3h-1zM6 0h1v3h-1z" fill="#000"/></svg></div></div>
<div class="" style="position:absolute;left:1078px;top:656px;width:39px;height:17px;background:#fff;overflow:hidden"><div class="cb g" style="left:14px;top:3px"></div></div>
<div class="" style="position:absolute;left:1118px;top:656px;width:39px;height:17px;background:#fff;overflow:hidden"><div class="cb g" style="left:14px;top:3px"></div></div>
<div class="" style="position:absolute;left:5px;top:674px;width:10px;height:17px;background:#f0f0f0;box-shadow:inset 1px 1px 0 #fff"></div>
<div class="hl" style="position:absolute;left:5px;top:691px;width:10px;height:1px;"></div>
<div class="" style="position:absolute;left:33px;top:674px;width:69px;height:17px;background:#fff;overflow:hidden"><div class="t" style="left:1px;top:3px;letter-spacing:-0.282px;">INV341</div></div>
<div class="" style="position:absolute;left:103px;top:674px;width:69px;height:17px;background:#fff;overflow:hidden"><div class="t" style="left:1px;top:3px;letter-spacing:-0.243px;">N-J564</div></div>
<div class="" style="position:absolute;left:173px;top:674px;width:179px;height:17px;background:#fff;overflow:hidden"><div class="t" style="left:1px;top:3px;letter-spacing:-0.145px;">A-1 Audio</div></div>
<div class="" style="position:absolute;left:353px;top:674px;width:64px;height:17px;background:#fff;overflow:hidden"><div class="t" style="left:1px;top:3px;letter-spacing:0.118px;">11/9/2015</div></div>
<div class="" style="position:absolute;left:418px;top:674px;width:69px;height:17px;background:#fff;overflow:hidden"></div>
<div class="" style="position:absolute;left:488px;top:674px;width:74px;height:17px;background:#fff;overflow:hidden"><div class="t r" style="left:0;top:3px;width:71px;letter-spacing:-0.104px;">$2,540.00</div></div>
<div class="" style="position:absolute;left:563px;top:674px;width:74px;height:17px;background:#fff;overflow:hidden"><div class="t r" style="left:0;top:3px;width:71px;letter-spacing:-0.109px;">$212.40</div></div>
<div class="" style="position:absolute;left:638px;top:674px;width:74px;height:17px;background:#fff;overflow:hidden"><div class="t r" style="left:0;top:3px;width:71px;letter-spacing:-0.104px;">$2,752.40</div></div>
<div class="" style="position:absolute;left:713px;top:674px;width:39px;height:17px;background:#fff;overflow:hidden"><svg width="16" height="13" viewBox="0 0 16 13" style="position:absolute;left:11px;top:2px"><path d="M0.5 0.5H12.5L15.5 3.5V12.5H0.5Z" fill="url(#ng)" stroke="#d6d6d6"/><path d="M12.5 0.5V3.5H15.5Z" fill="#ececec" stroke="#d9d9d9" stroke-width="0.6"/><text x="7" y="10" text-anchor="middle" font-family="Liberation Sans" font-style="italic" font-size="10" fill="#aaaaaa">a</text></svg></div>
<div class="" style="position:absolute;left:753px;top:674px;width:79px;height:17px;background:#fff;overflow:hidden"><div class="t" style="left:1px;top:3px;letter-spacing:-0.327px;">A1AUDIO</div></div>
<div class="" style="position:absolute;left:833px;top:674px;width:119px;height:17px;background:#fff;overflow:hidden"><div class="t" style="left:1px;top:3px;letter-spacing:-0.363px;">Greg Smith</div></div>
<div class="" style="position:absolute;left:953px;top:674px;width:84px;height:17px;background:#fff;overflow:hidden"><div class="t" style="left:1px;top:3px;letter-spacing:-0.142px;">Not Posted</div></div>
<div class="" style="position:absolute;left:1038px;top:674px;width:39px;height:17px;background:#fff;overflow:hidden"><div class="cb g" style="left:14px;top:3px"></div></div>
<div class="" style="position:absolute;left:1078px;top:674px;width:39px;height:17px;background:#fff;overflow:hidden"><div class="cb g" style="left:14px;top:3px"></div></div>
<div class="" style="position:absolute;left:1118px;top:674px;width:39px;height:17px;background:#fff;overflow:hidden"><div class="cb g" style="left:14px;top:3px"></div></div>
<div class="" style="position:absolute;left:5px;top:692px;width:10px;height:17px;background:#f0f0f0;box-shadow:inset 1px 1px 0 #fff"></div>
<div class="hl" style="position:absolute;left:5px;top:709px;width:10px;height:1px;"></div>
<div class="" style="position:absolute;left:33px;top:692px;width:69px;height:17px;background:#fff;overflow:hidden"><div class="t" style="left:1px;top:3px;letter-spacing:-0.282px;">INV342</div></div>
<div class="" style="position:absolute;left:103px;top:692px;width:69px;height:17px;background:#fff;overflow:hidden"><div class="t" style="left:1px;top:3px;letter-spacing:-0.243px;">N-J564</div></div>
<div class="" style="position:absolute;left:173px;top:692px;width:179px;height:17px;background:#fff;overflow:hidden"><div class="t" style="left:1px;top:3px;letter-spacing:-0.145px;">A-1 Audio</div></div>
<div class="" style="position:absolute;left:353px;top:692px;width:64px;height:17px;background:#fff;overflow:hidden"><div class="t" style="left:1px;top:3px;letter-spacing:0.118px;">11/9/2015</div></div>
<div class="" style="position:absolute;left:418px;top:692px;width:69px;height:17px;background:#fff;overflow:hidden"></div>
<div class="" style="position:absolute;left:488px;top:692px;width:74px;height:17px;background:#fff;overflow:hidden"><div class="t r" style="left:0;top:3px;width:71px;letter-spacing:0.004px;">($50.00)</div></div>
<div class="" style="position:absolute;left:563px;top:692px;width:74px;height:17px;background:#fff;overflow:hidden"><div class="t r" style="left:0;top:3px;width:71px;letter-spacing:-0.105px;">$0.00</div></div>
<div class="" style="position:absolute;left:638px;top:692px;width:74px;height:17px;background:#fff;overflow:hidden"><div class="t r" style="left:0;top:3px;width:71px;letter-spacing:0.004px;">($50.00)</div></div>
<div class="" style="position:absolute;left:713px;top:692px;width:39px;height:17px;background:#fff;overflow:hidden"><svg width="16" height="13" viewBox="0 0 16 13" style="position:absolute;left:11px;top:2px"><path d="M0.5 0.5H12.5L15.5 3.5V12.5H0.5Z" fill="url(#ng)" stroke="#d6d6d6"/><path d="M12.5 0.5V3.5H15.5Z" fill="#ececec" stroke="#d9d9d9" stroke-width="0.6"/><text x="7" y="10" text-anchor="middle" font-family="Liberation Sans" font-style="italic" font-size="10" fill="#aaaaaa">a</text></svg></div>
<div class="" style="position:absolute;left:753px;top:692px;width:79px;height:17px;background:#fff;overflow:hidden"><div class="t" style="left:1px;top:3px;letter-spacing:-0.327px;">A1AUDIO</div></div>
<div class="" style="position:absolute;left:833px;top:692px;width:119px;height:17px;background:#fff;overflow:hidden"><div class="t" style="left:1px;top:3px;letter-spacing:-0.363px;">Greg Smith</div></div>
<div class="" style="position:absolute;left:953px;top:692px;width:84px;height:17px;background:#fff;overflow:hidden"><div class="t" style="left:1px;top:3px;letter-spacing:-0.142px;">Not Posted</div></div>
<div class="" style="position:absolute;left:1038px;top:692px;width:39px;height:17px;background:#fff;overflow:hidden"><div class="cb g" style="left:14px;top:3px"><svg class="ck" width="7" height="7" viewBox="0 0 7 7" shape-rendering="crispEdges"><path d="M0 2h1v3h-1zM1 3h1v3h-1zM2 4h1v3h-1zM3 3h1v3h-1zM4 2h1v3h-1zM5 1h1v3h-1zM6 0h1v3h-1z" fill="#000"/></svg></div></div>
<div class="" style="position:absolute;left:1078px;top:692px;width:39px;height:17px;background:#fff;overflow:hidden"><div class="cb g" style="left:14px;top:3px"></div></div>
<div class="" style="position:absolute;left:1118px;top:692px;width:39px;height:17px;background:#fff;overflow:hidden"><div class="cb g" style="left:14px;top:3px"></div></div>
<div class="" style="position:absolute;left:5px;top:710px;width:10px;height:17px;background:#f0f0f0;box-shadow:inset 1px 1px 0 #fff"></div>
<div class="hl" style="position:absolute;left:5px;top:727px;width:10px;height:1px;"></div>
<div class="" style="position:absolute;left:33px;top:710px;width:69px;height:17px;background:#fff;overflow:hidden"><div class="t" style="left:1px;top:3px;letter-spacing:-0.282px;">INV336</div></div>
<div class="" style="position:absolute;left:103px;top:710px;width:69px;height:17px;background:#fff;overflow:hidden"><div class="t" style="left:1px;top:3px;letter-spacing:-0.243px;">N-J561</div></div>
<div class="" style="position:absolute;left:173px;top:710px;width:179px;height:17px;background:#fff;overflow:hidden"><div class="t" style="left:1px;top:3px;letter-spacing:-0.091px;">Fox Corporation</div></div>
<div class="" style="position:absolute;left:353px;top:710px;width:64px;height:17px;background:#fff;overflow:hidden"><div class="t" style="left:1px;top:3px;letter-spacing:0.095px;">10/22/2015</div></div>
<div class="" style="position:absolute;left:418px;top:710px;width:69px;height:17px;background:#fff;overflow:hidden"></div>
<div class="" style="position:absolute;left:488px;top:710px;width:74px;height:17px;background:#fff;overflow:hidden"><div class="t r" style="left:0;top:3px;width:71px;letter-spacing:-0.105px;">$42,887.64</div></div>
<div class="" style="position:absolute;left:563px;top:710px;width:74px;height:17px;background:#fff;overflow:hidden"><div class="t r" style="left:0;top:3px;width:71px;letter-spacing:-0.104px;">$4,288.76</div></div>
<div class="" style="position:absolute;left:638px;top:710px;width:74px;height:17px;background:#fff;overflow:hidden"><div class="t r" style="left:0;top:3px;width:71px;letter-spacing:-0.105px;">$47,176.40</div></div>
<div class="" style="position:absolute;left:713px;top:710px;width:39px;height:17px;background:#fff;overflow:hidden"><svg width="16" height="13" viewBox="0 0 16 13" style="position:absolute;left:11px;top:2px"><path d="M0.5 0.5H12.5L15.5 3.5V12.5H0.5Z" fill="url(#ng)" stroke="#d6d6d6"/><path d="M12.5 0.5V3.5H15.5Z" fill="#ececec" stroke="#d9d9d9" stroke-width="0.6"/><text x="7" y="10" text-anchor="middle" font-family="Liberation Sans" font-style="italic" font-size="10" fill="#aaaaaa">a</text></svg></div>
<div class="" style="position:absolute;left:753px;top:710px;width:79px;height:17px;background:#fff;overflow:hidden"><div class="t" style="left:1px;top:3px;letter-spacing:-0.871px;">FOX</div></div>
<div class="" style="position:absolute;left:833px;top:710px;width:119px;height:17px;background:#fff;overflow:hidden"><div class="t" style="left:1px;top:3px;letter-spacing:-0.363px;">Greg Smith</div></div>
<div class="" style="position:absolute;left:953px;top:710px;width:84px;height:17px;background:#fff;overflow:hidden"><div class="t" style="left:1px;top:3px;letter-spacing:-0.142px;">Not Posted</div></div>
<div class="" style="position:absolute;left:1038px;top:710px;width:39px;height:17px;background:#fff;overflow:hidden"><div class="cb g" style="left:14px;top:3px"><svg class="ck" width="7" height="7" viewBox="0 0 7 7" shape-rendering="crispEdges"><path d="M0 2h1v3h-1zM1 3h1v3h-1zM2 4h1v3h-1zM3 3h1v3h-1zM4 2h1v3h-1zM5 1h1v3h-1zM6 0h1v3h-1z" fill="#000"/></svg></div></div>
<div class="" style="position:absolute;left:1078px;top:710px;width:39px;height:17px;background:#fff;overflow:hidden"><div class="cb g" style="left:14px;top:3px"></div></div>
<div class="" style="position:absolute;left:1118px;top:710px;width:39px;height:17px;background:#fff;overflow:hidden"><div class="cb g" style="left:14px;top:3px"></div></div>
<div class="" style="position:absolute;left:5px;top:728px;width:10px;height:17px;background:#f0f0f0;box-shadow:inset 1px 1px 0 #fff"></div>
<div class="" style="position:absolute;left:33px;top:728px;width:69px;height:17px;background:#fff;overflow:hidden"><div class="t" style="left:1px;top:3px;letter-spacing:-0.282px;">INV337</div></div>
<div class="" style="position:absolute;left:103px;top:728px;width:69px;height:17px;background:#fff;overflow:hidden"><div class="t" style="left:1px;top:3px;letter-spacing:-0.243px;">N-J561</div></div>
<div class="" style="position:absolute;left:173px;top:728px;width:179px;height:17px;background:#fff;overflow:hidden"><div class="t" style="left:1px;top:3px;letter-spacing:-0.091px;">Fox Corporation</div></div>
<div class="" style="position:absolute;left:353px;top:728px;width:64px;height:17px;background:#fff;overflow:hidden"><div class="t" style="left:1px;top:3px;letter-spacing:0.095px;">10/22/2015</div></div>
<div class="" style="position:absolute;left:418px;top:728px;width:69px;height:17px;background:#fff;overflow:hidden"></div>
<div class="" style="position:absolute;left:488px;top:728px;width:74px;height:17px;background:#fff;overflow:hidden"><div class="t r" style="left:0;top:3px;width:71px;letter-spacing:-0.107px;">$54.24</div></div>
<div class="" style="position:absolute;left:563px;top:728px;width:74px;height:17px;background:#fff;overflow:hidden"><div class="t r" style="left:0;top:3px;width:71px;letter-spacing:-0.105px;">$5.42</div></div>
<div class="" style="position:absolute;left:638px;top:728px;width:74px;height:17px;background:#fff;overflow:hidden"><div class="t r" style="left:0;top:3px;width:71px;letter-spacing:-0.107px;">$59.66</div></div>
<div class="" style="position:absolute;left:713px;top:728px;width:39px;height:17px;background:#fff;overflow:hidden"><svg width="16" height="13" viewBox="0 0 16 13" style="position:absolute;left:11px;top:2px"><path d="M0.5 0.5H12.5L15.5 3.5V12.5H0.5Z" fill="url(#ng)" stroke="#d6d6d6"/><path d="M12.5 0.5V3.5H15.5Z" fill="#ececec" stroke="#d9d9d9" stroke-width="0.6"/><text x="7" y="10" text-anchor="middle" font-family="Liberation Sans" font-style="italic" font-size="10" fill="#aaaaaa">a</text></svg></div>
<div class="" style="position:absolute;left:753px;top:728px;width:79px;height:17px;background:#fff;overflow:hidden"><div class="t" style="left:1px;top:3px;letter-spacing:-0.871px;">FOX</div></div>
<div class="" style="position:absolute;left:833px;top:728px;width:119px;height:17px;background:#fff;overflow:hidden"><div class="t" style="left:1px;top:3px;letter-spacing:-0.363px;">Greg Smith</div></div>
<div class="" style="position:absolute;left:953px;top:728px;width:84px;height:17px;background:#fff;overflow:hidden"><div class="t" style="left:1px;top:3px;letter-spacing:-0.142px;">Not Posted</div></div>
<div class="" style="position:absolute;left:1038px;top:728px;width:39px;height:17px;background:#fff;overflow:hidden"><div class="cb g" style="left:14px;top:3px"></div></div>
<div class="" style="position:absolute;left:1078px;top:728px;width:39px;height:17px;background:#fff;overflow:hidden"><div class="cb g" style="left:14px;top:3px"></div></div>
<div class="" style="position:absolute;left:1118px;top:728px;width:39px;height:17px;background:#fff;overflow:hidden"><div class="cb g" style="left:14px;top:3px"></div></div>
<div class="" style="position:absolute;left:1158px;top:133px;width:17px;height:612px;background:#f7f7f7;background-image:repeating-conic-gradient(#ffffff 0% 25%,#e6e6e6 0% 50%);background-size:2px 2px"></div>
<div class="" style="position:absolute;left:1175px;top:133px;width:1px;height:613px;background:#b9b9b9"></div>
<div class="" style="position:absolute;left:1158px;top:745px;width:18px;height:1px;background:#b9b9b9"></div>
<div class="" style="position:absolute;left:1158px;top:133px;width:17px;height:17px;background:#f0f0f0;border:1px solid #000;box-sizing:border-box;box-shadow:inset 0 0 0 1px #fff"></div>
<svg width="9" height="5" viewBox="0 0 9 5" shape-rendering="crispEdges" style="position:absolute;left:1162px;top:139px"><path d="M4 0h1v1h-1zM3 1h3v1h-3zM2 2h5v1h-5zM1 3h7v1h-7zM0 4h9v1h-9z" fill="#000"/></svg>
<div class="" style="position:absolute;left:1158px;top:150px;width:17px;height:54px;background:#f0f0f0;border:1px solid #000;box-sizing:border-box;box-shadow:inset 0 0 0 1px #fff"></div>
<div class="" style="position:absolute;left:1158px;top:728px;width:17px;height:17px;background:#f0f0f0;border:1px solid #000;box-sizing:border-box;box-shadow:inset 0 0 0 1px #fff"></div>
<svg width="9" height="5" viewBox="0 0 9 5" shape-rendering="crispEdges" style="position:absolute;left:1162px;top:734px"><path d="M0 0h9v1h-9zM1 1h7v1h-7zM2 2h5v1h-5zM3 3h3v1h-3zM4 4h1v1h-1z" fill="#000"/></svg>
</body></html>
